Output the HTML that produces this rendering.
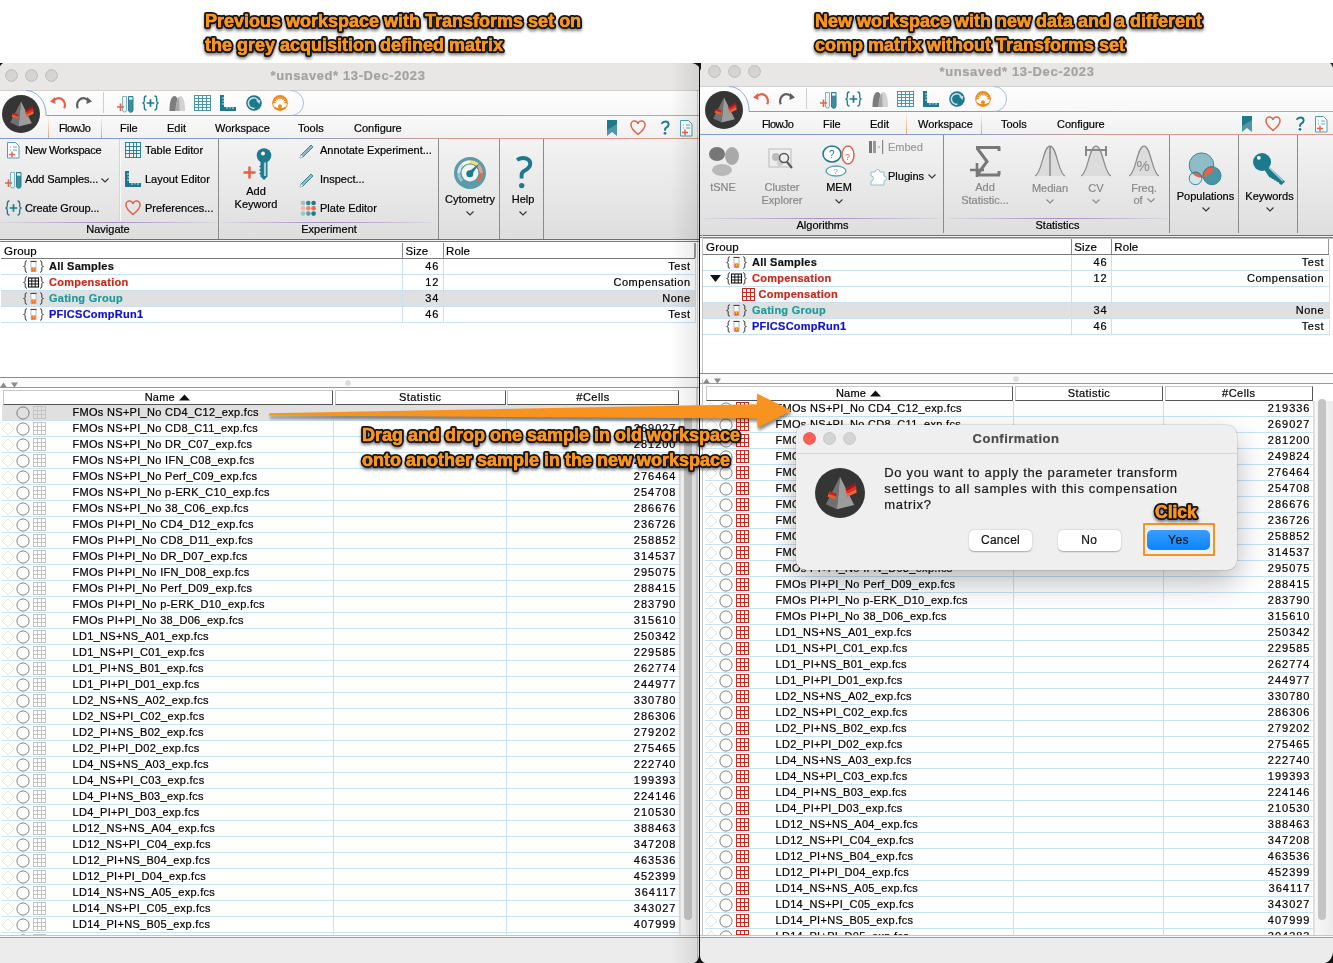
<!DOCTYPE html>
<html><head><meta charset="utf-8"><style>
html,body{margin:0;padding:0;}
body{width:1333px;height:963px;overflow:hidden;position:relative;background:#fff;font-family:'Liberation Sans', sans-serif;}
.clip{position:absolute;left:0;top:0;width:1333px;height:963px;overflow:hidden;}
div{-webkit-text-stroke:0.2px currentColor;}
</style></head><body><div id="root" style="position:absolute;left:0;top:0;width:1333px;height:963px;will-change:transform;">
<div class="clip" style="clip-path:inset(63px 634px 0 0px);"><div style="position:absolute;left:-3px;top:63px;width:702px;height:910px;background:#ececec;"></div><div style="position:absolute;left:-3px;top:63px;width:702px;height:28px;background:#e8e7e6;border-bottom:1px solid #d0d0d0;box-sizing:border-box;"></div><svg style="position:absolute;left:4.5px;top:69.2px;overflow:visible;" width="13" height="13" viewBox="0 0 13 13"><circle cx="6.5" cy="6.5" r="5.9" fill="#d4d4d4" stroke="#b9b9b9" stroke-width="0.9"/></svg><svg style="position:absolute;left:24.5px;top:69.2px;overflow:visible;" width="13" height="13" viewBox="0 0 13 13"><circle cx="6.5" cy="6.5" r="5.9" fill="#d4d4d4" stroke="#b9b9b9" stroke-width="0.9"/></svg><svg style="position:absolute;left:44.5px;top:69.2px;overflow:visible;" width="13" height="13" viewBox="0 0 13 13"><circle cx="6.5" cy="6.5" r="5.9" fill="#d4d4d4" stroke="#b9b9b9" stroke-width="0.9"/></svg><div style="position:absolute;top:67.00px;height:17px;line-height:17px;font-size:13px;color:#a2a2a2;font-weight:bold;white-space:nowrap;letter-spacing:0.6px;left:198.00px;width:300px;text-align:center;">*unsaved* 13-Dec-2023</div><div style="position:absolute;left:-3px;top:91px;width:702px;height:24.5px;background:linear-gradient(#fdfdfd,#f8f8f8);"></div><div style="position:absolute;left:-3px;top:115.5px;width:702px;height:22.5px;background:linear-gradient(#f9f9f9,#f1f1f1);"></div><div style="position:absolute;left:46px;top:115px;width:653px;height:1px;background:linear-gradient(90deg,#7aa0d8 0%,#7aa0d8 40%,#d99a86 70%,#d99a86 100%);"></div><div style="position:absolute;left:-3px;top:138px;width:702px;height:1px;background:linear-gradient(90deg,#7aa0d8 0%,#8aa0c8 40%,#d99a86 70%,#d99a86 100%);"></div><svg style="position:absolute;left:26px;top:89.5px;overflow:visible;" width="300" height="27" viewBox="0 0 300 27"><path d="M265 0.5 A12.5 12.5 0 0 1 265 25.5" fill="none" stroke="#9db8e0" stroke-width="0.9"/><path d="M0 0.5 A20 24 0 0 1 20 25.5" fill="none" stroke="#7ea6de" stroke-width="0.9"/></svg><svg style="position:absolute;left:2px;top:95px;overflow:visible;" width="38" height="38" viewBox="0 0 38 38"><g transform="translate(19,19) scale(1.0)"><circle cx="0" cy="0" r="19" fill="#353535"/>
<polygon points="0,-12.4 -10.8,8.6 -2.4,12.4" fill="#707070"/>
<polygon points="0,-12.4 -2.4,12.4 10.8,9.2" fill="#9c9c9c"/>
<polygon points="4.2,-3.6 12,-8 12.2,-5.6 4.6,-1.4" fill="#a8161a"/>
<polygon points="4.6,-1.4 12.2,-5.6 12.4,-3.0 5.0,0.8" fill="#e0302a"/>
<polygon points="5.0,0.8 12.4,-3.0 12.6,-0.2 5.4,3.0" fill="#f2642a"/>
<polygon points="-8.2,-1.6 -2.6,0.6 -3.0,2.8 -8.8,0.6" fill="#c62020"/>
<polygon points="-8.8,0.6 -3.0,2.8 -3.4,5.0 -9.4,2.8" fill="#ee5a2a"/></g></svg><svg style="position:absolute;left:50px;top:96.3px;overflow:visible;" width="16" height="12" viewBox="0 0 16 12"><path d="M3 5.8 A6 6.5 0 0 1 14.2 12.2" fill="none" stroke="#e0644a" stroke-width="2.2"/>
<path d="M0 5.5l5-4.5 .5 7z" fill="#e0644a"/></svg><svg style="position:absolute;left:76px;top:96.3px;overflow:visible;" width="16" height="12" viewBox="0 0 16 12"><path d="M13 5.8 A6 6.5 0 0 0 1.8 12.2" fill="none" stroke="#5e5e5e" stroke-width="2.2"/>
<path d="M16 5.5l-5-4.5-.5 7z" fill="#5e5e5e"/></svg><div style="position:absolute;left:103px;top:92px;width:1px;height:21px;background:#cfcfcf;"></div><svg style="position:absolute;left:116px;top:95px;overflow:visible;" width="18.0" height="18.0" viewBox="0 0 18.0 18.0"><g transform="scale(1.0)"><path d="M6.5 1.5h4v13.5a2 2 0 0 1-4 0z" fill="#e6f1f3" stroke="#7fb3bf" stroke-width="1"/>
<path d="M7 2.5h3v2h-3z" fill="#fff"/>
<path d="M12.5 1.5h4.5v13.5a2.25 2.25 0 0 1-4.5 0z" fill="#3f8c9c" stroke="#2b7f90" stroke-width="1"/>
<path d="M13 2.2h3.5v2.5h-3.5z" fill="#e6f1f3"/>
<path d="M1 12h7M4.5 8.5v7.5" stroke="#e0644a" stroke-width="1.6"/></g></svg><svg style="position:absolute;left:142px;top:95px;overflow:visible;" width="17.0" height="16.0" viewBox="0 0 17.0 16.0"><g transform="scale(1.0)" fill="none" stroke="#1d7a8c" stroke-width="1.3">
<path d="M4.5 1C2.6 1 2.3 2 2.3 3.5V6C2.3 7.2 1.6 7.8 0.6 8 1.6 8.2 2.3 8.8 2.3 10V12.5C2.3 14 2.6 15 4.5 15"/>
<path d="M12.5 1C14.4 1 14.7 2 14.7 3.5V6C14.7 7.2 15.4 7.8 16.4 8 15.4 8.2 14.7 8.8 14.7 10V12.5C14.7 14 14.4 15 12.5 15"/>
<path d="M8.5 4.2v7.6M4.7 8h7.6" stroke-width="1.7"/></g></svg><svg style="position:absolute;left:168px;top:95px;overflow:visible;" width="18" height="17" viewBox="0 0 18 17"><path d="M1.5 16C1.5 6 3.5 1 6.5 1S11 6 11.5 16z" fill="#7c7c7c"/>
<path d="M7.5 16C8 6 10 1 12.5 1S17 6 17 16z" fill="#d2d2d2"/>
<path d="M7.6 16C8 8 9.5 3.5 11 2 11.5 6 11.5 11 11.5 16z" fill="#a8a8a8"/></svg><svg style="position:absolute;left:194px;top:95px;overflow:visible;" width="17" height="16" viewBox="0 0 17 16"><path d="M0.5 0V16M4.5 0V16M8.5 0V16M12.5 0V16M16.5 0V16M0 0.5H17M0 3.5H17M0 6.5H17M0 9.5H17M0 12.5H17M0 15.5H17" stroke="#4a97a8" stroke-width="1.0" fill="none" shape-rendering="crispEdges"/></svg><svg style="position:absolute;left:220px;top:95px;overflow:visible;" width="16.0" height="16.0" viewBox="0 0 16.0 16.0"><g transform="scale(1.0)"><path d="M0 0h4v12h12v4H0z" fill="#1d7a8c"/>
<path d="M4 3h-2M4 6h-1.5M4 9h-2M7 12v2M10 12v1.5M13 12v2" stroke="#fff" stroke-width="0.8"/></g></svg><svg style="position:absolute;left:246px;top:95px;overflow:visible;" width="16" height="16" viewBox="0 0 16 16"><circle cx="8" cy="8" r="7.8" fill="#1d7a8c"/>
<path d="M8.5 13.2A5.2 5.2 0 1 1 12.2 5.6" fill="none" stroke="#cfe3e8" stroke-width="1.5"/>
<path d="M10.2 5.6l4.2-0.6-1 4z" fill="#cfe3e8"/></svg><svg style="position:absolute;left:272px;top:95px;overflow:visible;" width="16" height="16" viewBox="0 0 16 16"><circle cx="8" cy="8" r="7.9" fill="#f0891c"/>
<polygon points="1.10,8.60 4.47,7.90 1.63,5.96 5.01,6.60 3.12,3.72 6.00,5.61 5.36,2.23 7.30,5.07 8.00,1.70 8.70,5.07 10.64,2.23 10.00,5.61 12.88,3.72 10.99,6.60 14.37,5.96 11.53,7.90 14.90,8.60 14.20,11.20 11.00,12.80 5.00,12.80 1.80,11.20" fill="#fff"/>
<circle cx="8" cy="11.2" r="1.9" fill="#f0891c"/></svg><div style="position:absolute;top:121.30px;height:14px;line-height:14px;font-size:11px;color:#000;font-weight:normal;white-space:nowrap;letter-spacing:-0.6px;left:59px;">FlowJo</div><div style="position:absolute;top:121.30px;height:14px;line-height:14px;font-size:11px;color:#000;font-weight:normal;white-space:nowrap;left:120px;">File</div><div style="position:absolute;top:121.30px;height:14px;line-height:14px;font-size:11px;color:#000;font-weight:normal;white-space:nowrap;left:167px;">Edit</div><div style="position:absolute;top:121.30px;height:14px;line-height:14px;font-size:11px;color:#000;font-weight:normal;white-space:nowrap;left:215px;">Workspace</div><div style="position:absolute;top:121.30px;height:14px;line-height:14px;font-size:11px;color:#000;font-weight:normal;white-space:nowrap;left:298px;">Tools</div><div style="position:absolute;top:121.30px;height:14px;line-height:14px;font-size:11px;color:#000;font-weight:normal;white-space:nowrap;left:354px;">Configure</div><div style="position:absolute;left:47.5px;top:116px;width:1px;height:22px;background:linear-gradient(#f8f8f8,#e8a070);"></div><div style="position:absolute;left:100.5px;top:116px;width:1px;height:22px;background:linear-gradient(#f8f8f8,#e8a070);"></div><svg style="position:absolute;left:607px;top:120px;overflow:visible;" width="10" height="16" viewBox="0 0 10 16"><path d="M0 0h10v16l-5-4-5 4z" fill="#4f97a7"/><path d="M0 0h10v4L0 10z" fill="#1d7a8c"/></svg><svg style="position:absolute;left:630px;top:120px;overflow:visible;" width="16.0" height="16.0" viewBox="0 0 16.0 16.0"><g transform="scale(1.0)"><path d="M8 14.5C3 10.5 1 8 1 5a3.5 3.5 0 0 1 7-1 3.5 3.5 0 0 1 7 1c0 3-2 5.5-7 9.5z" fill="none" stroke="#e0644a" stroke-width="1.5"/></g></svg><svg style="position:absolute;left:659px;top:119px;overflow:visible;" width="12" height="17" viewBox="0 0 12 17"><g transform="translate(0.6,0.8) scale(0.87)"><path d="M2.2 4.5C3.5 2.6 5.2 2 6.8 2 9 2 10.4 3.4 10.4 5.3 10.4 7.3 8.8 8.2 7.6 9 6.6 9.7 6.2 10.4 6.2 11.6V12.5" fill="none" stroke="#1d7a8c" stroke-width="2.2"/><circle cx="6.2" cy="15.6" r="1.6" fill="#1d7a8c"/></g></svg><svg style="position:absolute;left:680px;top:120px;overflow:visible;" width="12.0" height="16.0" viewBox="0 0 12.0 16.0"><g transform="scale(1.0)"><path d="M0.5 0.5h8l3.5 3.5v12h-11.5z" fill="#fff" stroke="#4f9fb0" stroke-width="1"/>
<path d="M3 5h1M6 5h4M6 8h4M3 8h1" stroke="#4f9fb0" stroke-width="0.9"/>
<path d="M2 12.5h6M5 9.5v6" stroke="#e0644a" stroke-width="1.4"/></g></svg><div style="position:absolute;left:-3px;top:138.5px;width:702px;height:100.5px;background:linear-gradient(#f3f3f3,#dedede);"></div><div style="position:absolute;left:-3px;top:239px;width:702px;height:1px;background:#707070;"></div><div style="position:absolute;left:-3px;top:240px;width:702px;height:1px;background:#f4f4f4;"></div><div style="position:absolute;left:-3px;top:241px;width:702px;height:1px;background:#7a7a7a;"></div><svg style="position:absolute;left:7px;top:142px;overflow:visible;" width="12.0" height="16.0" viewBox="0 0 12.0 16.0"><g transform="scale(1.0)"><path d="M0.5 0.5h8l3.5 3.5v12h-11.5z" fill="#fff" stroke="#4f9fb0" stroke-width="1"/>
<path d="M3 5h1M6 5h4M6 8h4M3 8h1" stroke="#4f9fb0" stroke-width="0.9"/>
<path d="M2 12.5h6M5 9.5v6" stroke="#e0644a" stroke-width="1.4"/></g></svg><div style="position:absolute;top:143.30px;height:14px;line-height:14px;font-size:11px;color:#000;font-weight:normal;white-space:nowrap;letter-spacing:-0.28px;left:25px;">New Workspace</div><svg style="position:absolute;left:4px;top:171px;overflow:visible;" width="18.0" height="18.0" viewBox="0 0 18.0 18.0"><g transform="scale(1.0)"><path d="M6.5 1.5h4v13.5a2 2 0 0 1-4 0z" fill="#e6f1f3" stroke="#7fb3bf" stroke-width="1"/>
<path d="M7 2.5h3v2h-3z" fill="#fff"/>
<path d="M12.5 1.5h4.5v13.5a2.25 2.25 0 0 1-4.5 0z" fill="#3f8c9c" stroke="#2b7f90" stroke-width="1"/>
<path d="M13 2.2h3.5v2.5h-3.5z" fill="#e6f1f3"/>
<path d="M1 12h7M4.5 8.5v7.5" stroke="#e0644a" stroke-width="1.6"/></g></svg><div style="position:absolute;top:172.30px;height:14px;line-height:14px;font-size:11px;color:#000;font-weight:normal;white-space:nowrap;letter-spacing:-0.1px;left:25px;">Add Samples...</div><svg style="position:absolute;left:101px;top:177.5px;overflow:visible;" width="8" height="5" viewBox="0 0 8 5"><path d="M0.5 0.5L4 4 7.5 0.5" fill="none" stroke="#333" stroke-width="1.1"/></svg><svg style="position:absolute;left:5px;top:200px;overflow:visible;" width="17.0" height="16.0" viewBox="0 0 17.0 16.0"><g transform="scale(1.0)" fill="none" stroke="#1d7a8c" stroke-width="1.3">
<path d="M4.5 1C2.6 1 2.3 2 2.3 3.5V6C2.3 7.2 1.6 7.8 0.6 8 1.6 8.2 2.3 8.8 2.3 10V12.5C2.3 14 2.6 15 4.5 15"/>
<path d="M12.5 1C14.4 1 14.7 2 14.7 3.5V6C14.7 7.2 15.4 7.8 16.4 8 15.4 8.2 14.7 8.8 14.7 10V12.5C14.7 14 14.4 15 12.5 15"/>
<path d="M8.5 4.2v7.6M4.7 8h7.6" stroke-width="1.7"/></g></svg><div style="position:absolute;top:201.30px;height:14px;line-height:14px;font-size:11px;color:#000;font-weight:normal;white-space:nowrap;letter-spacing:-0.1px;left:25px;">Create Group...</div><div style="position:absolute;left:118.5px;top:139px;width:1px;height:82px;background:#d6d6d6;"></div><div style="position:absolute;left:119.5px;top:139px;width:1px;height:82px;background:#fbfbfb;"></div><svg style="position:absolute;left:125px;top:142px;overflow:visible;" width="16" height="16" viewBox="0 0 16 16"><path d="M0.5 0V16M4.5 0V16M8.5 0V16M11.5 0V16M15.5 0V16M0 0.5H16M0 4.5H16M0 8.5H16M0 11.5H16M0 15.5H16" stroke="#1d7a8c" stroke-width="0.9" fill="none" shape-rendering="crispEdges"/></svg><div style="position:absolute;top:143.30px;height:14px;line-height:14px;font-size:11px;color:#000;font-weight:normal;white-space:nowrap;left:145px;">Table Editor</div><svg style="position:absolute;left:125px;top:171px;overflow:visible;" width="16.0" height="16.0" viewBox="0 0 16.0 16.0"><g transform="scale(1.0)"><path d="M0 0h4v12h12v4H0z" fill="#1d7a8c"/>
<path d="M4 3h-2M4 6h-1.5M4 9h-2M7 12v2M10 12v1.5M13 12v2" stroke="#fff" stroke-width="0.8"/></g></svg><div style="position:absolute;top:172.30px;height:14px;line-height:14px;font-size:11px;color:#000;font-weight:normal;white-space:nowrap;left:145px;">Layout Editor</div><svg style="position:absolute;left:125px;top:200px;overflow:visible;" width="16.0" height="16.0" viewBox="0 0 16.0 16.0"><g transform="scale(1.0)"><path d="M8 14.5C3 10.5 1 8 1 5a3.5 3.5 0 0 1 7-1 3.5 3.5 0 0 1 7 1c0 3-2 5.5-7 9.5z" fill="none" stroke="#e0644a" stroke-width="1.5"/></g></svg><div style="position:absolute;top:201.30px;height:14px;line-height:14px;font-size:11px;color:#000;font-weight:normal;white-space:nowrap;left:145px;">Preferences...</div><div style="position:absolute;left:0px;top:221.5px;width:217px;height:1px;background:linear-gradient(90deg,rgba(170,140,200,0.1),rgba(150,110,190,0.75) 50%,rgba(170,140,200,0.1));"></div><div style="position:absolute;top:222.30px;height:14px;line-height:14px;font-size:11px;color:#000;font-weight:normal;white-space:nowrap;left:58.00px;width:100px;text-align:center;">Navigate</div><div style="position:absolute;left:217.5px;top:138.5px;width:1px;height:100.5px;background:#8c8c8c;"></div><svg style="position:absolute;left:243px;top:148px;overflow:visible;" width="28.0" height="32.0" viewBox="0 0 28.0 32.0"><g transform="scale(1.0)"><circle cx="21" cy="7.5" r="7.3" fill="#1d7a8c"/><circle cx="20" cy="5.5" r="1.9" fill="#fff"/>
<path d="M17.5 12h7v16.5l-3.5 3.5-3.5-3.5v-2l-1.5-1 1.5-1v-1.5l-1.5-1 1.5-1v-1.5l-1.5-1 1.5-1z" fill="#1d7a8c"/><path d="M22 14.5v13.5" stroke="#a6cfd8" stroke-width="2.2"/>
<path d="M0.5 24.5h12M6.5 18.5v12" stroke="#e0644a" stroke-width="2.5"/></g></svg><div style="position:absolute;top:184.00px;height:14px;line-height:14px;font-size:11px;color:#000;font-weight:normal;white-space:nowrap;left:216.00px;width:80px;text-align:center;">Add</div><div style="position:absolute;top:196.50px;height:14px;line-height:14px;font-size:11px;color:#000;font-weight:normal;white-space:nowrap;left:216.00px;width:80px;text-align:center;">Keyword</div><svg style="position:absolute;left:299px;top:141px;overflow:visible;" width="16" height="17" viewBox="0 0 16 17"><path d="M2 14l10-10 2 2-10 10-3 1z" fill="#8fb8c4" stroke="#1d7a8c" stroke-width="0.8"/>
<path d="M1 17l1-3 2 2z" fill="#fff"/></svg><div style="position:absolute;top:143.30px;height:14px;line-height:14px;font-size:11px;color:#000;font-weight:normal;white-space:nowrap;left:320px;">Annotate Experiment...</div><svg style="position:absolute;left:299px;top:170px;overflow:visible;" width="16" height="17" viewBox="0 0 16 17"><path d="M2 14l10-10 2 2-10 10-3 1z" fill="#8fb8c4" stroke="#1d7a8c" stroke-width="0.8"/>
<path d="M1 17l1-3 2 2z" fill="#fff"/></svg><div style="position:absolute;top:172.30px;height:14px;line-height:14px;font-size:11px;color:#000;font-weight:normal;white-space:nowrap;left:320px;">Inspect...</div><svg style="position:absolute;left:300px;top:200px;overflow:visible;" width="16" height="16" viewBox="0 0 16 16"><circle cx="3.0" cy="3.0" r="2.3" fill="#9bc4cf"/><circle cx="8.3" cy="3.0" r="2.3" fill="#2a8898"/><circle cx="13.6" cy="3.0" r="2.3" fill="#1d7a8c"/><circle cx="3.0" cy="8.3" r="2.3" fill="#f3b9a6"/><circle cx="8.3" cy="8.3" r="2.3" fill="#f28c6e"/><circle cx="13.6" cy="8.3" r="2.3" fill="#e96a4a"/><circle cx="3.0" cy="13.6" r="2.3" fill="#9bc4cf"/><circle cx="8.3" cy="13.6" r="2.3" fill="#5aa0b0"/><circle cx="13.6" cy="13.6" r="2.3" fill="#1d7a8c"/></svg><div style="position:absolute;top:201.30px;height:14px;line-height:14px;font-size:11px;color:#000;font-weight:normal;white-space:nowrap;left:320px;">Plate Editor</div><div style="position:absolute;left:222px;top:221.5px;width:210px;height:1px;background:linear-gradient(90deg,rgba(170,140,200,0.1),rgba(150,110,190,0.75) 50%,rgba(170,140,200,0.1));"></div><div style="position:absolute;top:222.30px;height:14px;line-height:14px;font-size:11px;color:#000;font-weight:normal;white-space:nowrap;left:279.00px;width:100px;text-align:center;">Experiment</div><div style="position:absolute;left:437.5px;top:138.5px;width:1px;height:100.5px;background:#8c8c8c;"></div><svg style="position:absolute;left:454px;top:157px;overflow:visible;" width="32" height="32" viewBox="0 0 32 32"><circle cx="16" cy="16" r="16" fill="#5b9ca9"/><path d="M6.95 25.05A12.8 12.8 0 0 1 3.20 16.00L6.40 16.00A9.6 9.6 0 0 0 9.21 22.79z" fill="#9cc3cc"/><path d="M3.20 16.00A12.8 12.8 0 0 1 6.95 6.95L9.21 9.21A9.6 9.6 0 0 0 6.40 16.00z" fill="#d3e6ea"/><path d="M6.95 6.95A12.8 12.8 0 0 1 16.00 3.20L16.00 6.40A9.6 9.6 0 0 0 9.21 9.21z" fill="#fdf6df"/><path d="M16.00 3.20A12.8 12.8 0 0 1 25.05 6.95L22.79 9.21A9.6 9.6 0 0 0 16.00 6.40z" fill="#f8dd80"/><path d="M25.05 6.95A12.8 12.8 0 0 1 28.80 16.00L25.60 16.00A9.6 9.6 0 0 0 22.79 9.21z" fill="#ee9b82"/><path d="M28.80 16.00A12.8 12.8 0 0 1 25.05 25.05L22.79 22.79A9.6 9.6 0 0 0 25.60 16.00z" fill="#e86a4b"/><circle cx="16" cy="16" r="9.6" fill="#5b9ca9"/><circle cx="16" cy="16" r="8.4" fill="#f1f4f4"/><path d="M14 15.2L25.6 6.2 17.2 18.6z" fill="#1d7a8c"/><circle cx="15.8" cy="16.8" r="3.5" fill="#1d7a8c"/></svg><div style="position:absolute;top:192.00px;height:14px;line-height:14px;font-size:11px;color:#000;font-weight:normal;white-space:nowrap;left:430.00px;width:80px;text-align:center;">Cytometry</div><svg style="position:absolute;left:466px;top:210.5px;overflow:visible;" width="8" height="5" viewBox="0 0 8 5"><path d="M0.5 0.5L4 4 7.5 0.5" fill="none" stroke="#333" stroke-width="1.1"/></svg><div style="position:absolute;left:499.3px;top:138.5px;width:1px;height:100.5px;background:#8c8c8c;"></div><svg style="position:absolute;left:513px;top:155px;overflow:visible;" width="20" height="34" viewBox="0 0 20 34"><path d="M4 5C7 3 11 2.6 13.5 3.6 16.6 4.8 17.6 7.6 17 10.2 16.3 13 13.4 14.6 11 16 9.4 17 8.6 18 8.6 20V23.5" fill="none" stroke="#1d7a8c" stroke-width="3.9"/><circle cx="8.7" cy="30.6" r="2.7" fill="#1d7a8c"/></svg><div style="position:absolute;top:192.00px;height:14px;line-height:14px;font-size:11px;color:#000;font-weight:normal;white-space:nowrap;left:483.00px;width:80px;text-align:center;">Help</div><svg style="position:absolute;left:519px;top:210.5px;overflow:visible;" width="8" height="5" viewBox="0 0 8 5"><path d="M0.5 0.5L4 4 7.5 0.5" fill="none" stroke="#333" stroke-width="1.1"/></svg><div style="position:absolute;left:543.4px;top:138.5px;width:1px;height:100.5px;background:#8c8c8c;"></div><div style="position:absolute;left:-3px;top:242px;width:702px;height:135.5px;background:#fff;"></div><div style="position:absolute;left:-3px;top:377px;width:702px;height:1px;background:#8a8a8a;"></div><div style="position:absolute;left:-3px;top:378px;width:702px;height:9.5px;background:#fafafa;"></div><div style="position:absolute;left:-3px;top:387px;width:702px;height:1px;background:#9a9a9a;"></div><svg style="position:absolute;left:0px;top:381.5px;overflow:visible;" width="20" height="6" viewBox="0 0 20 6"><path d="M0 5.5L3.5 0.5 7 5.5z" fill="#8a8a8a"/><path d="M11 0.5h7L14.5 5.5z" fill="#8a8a8a"/></svg><svg style="position:absolute;left:345px;top:380px;overflow:visible;" width="6" height="6" viewBox="0 0 6 6"><circle cx="3" cy="3" r="2.8" fill="#dcdcdc"/></svg><div style="position:absolute;left:1px;top:243px;width:694px;height:15px;background:#fff;"></div><div style="position:absolute;left:1px;top:257.5px;width:694px;height:1.5px;background:#7a7a7a;"></div><div style="position:absolute;left:402px;top:243px;width:1px;height:15px;background:#8a8a8a;"></div><div style="position:absolute;left:442.5px;top:243px;width:1px;height:15px;background:#8a8a8a;"></div><div style="position:absolute;left:694px;top:243px;width:1.5px;height:15px;background:#9a9a9a;"></div><div style="position:absolute;top:243.50px;height:15px;line-height:15px;font-size:11.5px;color:#000;font-weight:normal;white-space:nowrap;letter-spacing:0.2px;left:4px;">Group</div><div style="position:absolute;top:243.50px;height:15px;line-height:15px;font-size:11.5px;color:#000;font-weight:normal;white-space:nowrap;letter-spacing:0.1px;left:405.5px;">Size</div><div style="position:absolute;top:243.50px;height:15px;line-height:15px;font-size:11.5px;color:#000;font-weight:normal;white-space:nowrap;letter-spacing:0.1px;left:446.0px;">Role</div><div style="position:absolute;left:1px;top:273.5px;width:694px;height:1px;background:#c9e2f3;"></div><svg style="position:absolute;left:23px;top:260.0px;overflow:visible;" width="21" height="13" viewBox="0 0 21 13"><path d="M4 0.8C2.3 0.8 2.2 1.6 2.2 3V5C2.2 5.8 1.6 6.3 0.6 6.5 1.6 6.7 2.2 7.2 2.2 8V10C2.2 11.4 2.3 12.2 4 12.2" fill="none" stroke="#222" stroke-width="0.9"/><g transform="translate(21,0) scale(-1,1)"><path d="M4 0.8C2.3 0.8 2.2 1.6 2.2 3V5C2.2 5.8 1.6 6.3 0.6 6.5 1.6 6.7 2.2 7.2 2.2 8V10C2.2 11.4 2.3 12.2 4 12.2" fill="none" stroke="#222" stroke-width="0.9"/></g><rect x="8" y="1.5" width="5" height="10" fill="#fff" stroke="#b0b0b0" stroke-width="0.8"/><path d="M7.5 1.4H13.5" stroke="#333" stroke-width="1"/><rect x="8.5" y="7.5" width="4" height="3.8" fill="#e8401c"/><rect x="9.5" y="7.5" width="2" height="3" fill="#f6c21a"/></svg><div style="position:absolute;top:259.00px;height:14px;line-height:14px;font-size:11px;color:#111;font-weight:bold;white-space:nowrap;letter-spacing:0.25px;left:49px;">All Samples</div><div style="position:absolute;top:259.00px;height:14px;line-height:14px;font-size:11px;color:#000;font-weight:normal;white-space:nowrap;letter-spacing:1.0px;right:893.5px;text-align:right;">46</div><div style="position:absolute;top:259.00px;height:14px;line-height:14px;font-size:11px;color:#000;font-weight:normal;white-space:nowrap;letter-spacing:0.5px;right:642.5px;text-align:right;">Test</div><div style="position:absolute;left:1px;top:289.5px;width:694px;height:1px;background:#c9e2f3;"></div><svg style="position:absolute;left:23px;top:276.0px;overflow:visible;" width="21" height="13" viewBox="0 0 21 13"><path d="M4 0.8C2.3 0.8 2.2 1.6 2.2 3V5C2.2 5.8 1.6 6.3 0.6 6.5 1.6 6.7 2.2 7.2 2.2 8V10C2.2 11.4 2.3 12.2 4 12.2" fill="none" stroke="#222" stroke-width="0.9"/><g transform="translate(21,0) scale(-1,1)"><path d="M4 0.8C2.3 0.8 2.2 1.6 2.2 3V5C2.2 5.8 1.6 6.3 0.6 6.5 1.6 6.7 2.2 7.2 2.2 8V10C2.2 11.4 2.3 12.2 4 12.2" fill="none" stroke="#222" stroke-width="0.9"/></g><rect x="5.5" y="2" width="10" height="9" fill="#fff" stroke="#111" stroke-width="1.1"/><path d="M8.8 2v9M12.2 2v9M5.5 5h10M5.5 8h10" stroke="#111" stroke-width="1"/></svg><div style="position:absolute;top:275.00px;height:14px;line-height:14px;font-size:11px;color:#c8281e;font-weight:bold;white-space:nowrap;letter-spacing:0.25px;left:49px;">Compensation</div><div style="position:absolute;top:275.00px;height:14px;line-height:14px;font-size:11px;color:#000;font-weight:normal;white-space:nowrap;letter-spacing:1.0px;right:893.5px;text-align:right;">12</div><div style="position:absolute;top:275.00px;height:14px;line-height:14px;font-size:11px;color:#000;font-weight:normal;white-space:nowrap;letter-spacing:0.5px;right:642.5px;text-align:right;">Compensation</div><div style="position:absolute;left:1px;top:290.5px;width:694px;height:15.5px;background:#e0e0e0;"></div><div style="position:absolute;left:1px;top:305.5px;width:694px;height:1px;background:#c9e2f3;"></div><svg style="position:absolute;left:23px;top:292.0px;overflow:visible;" width="21" height="13" viewBox="0 0 21 13"><path d="M4 0.8C2.3 0.8 2.2 1.6 2.2 3V5C2.2 5.8 1.6 6.3 0.6 6.5 1.6 6.7 2.2 7.2 2.2 8V10C2.2 11.4 2.3 12.2 4 12.2" fill="none" stroke="#222" stroke-width="0.9"/><g transform="translate(21,0) scale(-1,1)"><path d="M4 0.8C2.3 0.8 2.2 1.6 2.2 3V5C2.2 5.8 1.6 6.3 0.6 6.5 1.6 6.7 2.2 7.2 2.2 8V10C2.2 11.4 2.3 12.2 4 12.2" fill="none" stroke="#222" stroke-width="0.9"/></g><rect x="8" y="1.5" width="5" height="10" fill="#fff" stroke="#b0b0b0" stroke-width="0.8"/><path d="M7.5 1.4H13.5" stroke="#333" stroke-width="1"/><rect x="8.5" y="7.5" width="4" height="3.8" fill="#e8401c"/><rect x="9.5" y="7.5" width="2" height="3" fill="#f6c21a"/></svg><div style="position:absolute;top:291.00px;height:14px;line-height:14px;font-size:11px;color:#1b9a9c;font-weight:bold;white-space:nowrap;letter-spacing:0.25px;left:49px;">Gating Group</div><div style="position:absolute;top:291.00px;height:14px;line-height:14px;font-size:11px;color:#000;font-weight:normal;white-space:nowrap;letter-spacing:1.0px;right:893.5px;text-align:right;">34</div><div style="position:absolute;top:291.00px;height:14px;line-height:14px;font-size:11px;color:#000;font-weight:normal;white-space:nowrap;letter-spacing:0.5px;right:642.5px;text-align:right;">None</div><div style="position:absolute;left:1px;top:321.5px;width:694px;height:1px;background:#c9e2f3;"></div><svg style="position:absolute;left:23px;top:308.0px;overflow:visible;" width="21" height="13" viewBox="0 0 21 13"><path d="M4 0.8C2.3 0.8 2.2 1.6 2.2 3V5C2.2 5.8 1.6 6.3 0.6 6.5 1.6 6.7 2.2 7.2 2.2 8V10C2.2 11.4 2.3 12.2 4 12.2" fill="none" stroke="#222" stroke-width="0.9"/><g transform="translate(21,0) scale(-1,1)"><path d="M4 0.8C2.3 0.8 2.2 1.6 2.2 3V5C2.2 5.8 1.6 6.3 0.6 6.5 1.6 6.7 2.2 7.2 2.2 8V10C2.2 11.4 2.3 12.2 4 12.2" fill="none" stroke="#222" stroke-width="0.9"/></g><rect x="8" y="1.5" width="5" height="10" fill="#fff" stroke="#b0b0b0" stroke-width="0.8"/><path d="M7.5 1.4H13.5" stroke="#333" stroke-width="1"/><rect x="8.5" y="7.5" width="4" height="3.8" fill="#e8401c"/><rect x="9.5" y="7.5" width="2" height="3" fill="#f6c21a"/></svg><div style="position:absolute;top:307.00px;height:14px;line-height:14px;font-size:11px;color:#1010d0;font-weight:bold;white-space:nowrap;letter-spacing:0.25px;left:49px;">PFICSCompRun1</div><div style="position:absolute;top:307.00px;height:14px;line-height:14px;font-size:11px;color:#000;font-weight:normal;white-space:nowrap;letter-spacing:1.0px;right:893.5px;text-align:right;">46</div><div style="position:absolute;top:307.00px;height:14px;line-height:14px;font-size:11px;color:#000;font-weight:normal;white-space:nowrap;letter-spacing:0.5px;right:642.5px;text-align:right;">Test</div><div style="position:absolute;left:402px;top:259px;width:1px;height:63.5px;background:#c9e2f3;"></div><div style="position:absolute;left:442.5px;top:259px;width:1px;height:63.5px;background:#c9e2f3;"></div><div style="position:absolute;left:695px;top:259px;width:1px;height:63.5px;background:#c9e2f3;"></div><div style="position:absolute;left:-3px;top:388px;width:702px;height:547px;background:#fff;"></div><div style="position:absolute;left:3px;top:390px;width:329.5px;height:14.5px;background:#fff;border-top:1px solid #c8c8c8;border-left:1px solid #c8c8c8;border-right:1.5px solid #555;border-bottom:1.5px solid #555;box-sizing:border-box;"></div><div style="position:absolute;top:390.30px;height:14px;line-height:14px;font-size:11px;color:#000;font-weight:normal;white-space:nowrap;letter-spacing:0.2px;left:109.75px;width:100px;text-align:center;">Name</div><svg style="position:absolute;left:178.75px;top:393.5px;overflow:visible;" width="12" height="7" viewBox="0 0 12 7"><path d="M0 6.5L5.5 0.5 11 6.5z" fill="#111"/></svg><div style="position:absolute;left:335.0px;top:390px;width:170.5px;height:14.5px;background:#fff;border-top:1px solid #c8c8c8;border-left:1px solid #c8c8c8;border-right:1.5px solid #555;border-bottom:1.5px solid #555;box-sizing:border-box;"></div><div style="position:absolute;top:390.30px;height:14px;line-height:14px;font-size:11px;color:#000;font-weight:normal;white-space:nowrap;letter-spacing:0.45px;left:345.25px;width:150px;text-align:center;">Statistic</div><div style="position:absolute;left:507.0px;top:390px;width:172.0px;height:14.5px;background:#fff;border-top:1px solid #c8c8c8;border-left:1px solid #c8c8c8;border-right:1.5px solid #555;border-bottom:1.5px solid #555;box-sizing:border-box;"></div><div style="position:absolute;top:390.30px;height:14px;line-height:14px;font-size:11px;color:#000;font-weight:normal;white-space:nowrap;letter-spacing:0.45px;left:518.00px;width:150px;text-align:center;">#Cells</div><div style="position:absolute;left:680px;top:404.5px;width:17px;height:530.5px;background:linear-gradient(90deg,#f7f7f7,#ececec);border-left:1px solid #e4e4e4;box-sizing:border-box;"></div><div style="position:absolute;left:684px;top:410px;width:8px;height:510px;background:#c4c4c4;border-radius:4px;"></div><div class="clip" style="clip-path:inset(404.5px 0 28px 0);"><div style="position:absolute;left:2px;top:404.5px;width:677px;height:16px;background:#e0e0e0;"></div><div style="position:absolute;left:2px;top:420.0px;width:677px;height:1px;background:#c9e2f3;"></div><svg style="position:absolute;left:16.4px;top:405.5px;overflow:visible;" width="14" height="14" viewBox="0 0 14 14"><circle cx="7" cy="7" r="6.1" fill="none" stroke="#707070" stroke-width="0.9"/></svg><svg style="position:absolute;left:33px;top:406px;overflow:visible;" width="13" height="13" viewBox="0 0 13 13"><path d="M0.5 0V13M4.5 0V13M8.5 0V13M12.5 0V13M0 0.5H13M0 4.5H13M0 8.5H13M0 12.5H13" stroke="#c4c4c4" stroke-width="1.0" fill="none" shape-rendering="crispEdges"/></svg><div style="position:absolute;top:404.50px;height:14px;line-height:14px;font-size:11px;color:#000;font-weight:normal;white-space:nowrap;letter-spacing:0.3px;left:72.5px;">FMOs NS+PI_No CD4_C12_exp.fcs</div><div style="position:absolute;top:404.50px;height:14px;line-height:14px;font-size:11px;color:#000;font-weight:normal;white-space:nowrap;letter-spacing:1.0px;right:656.5px;text-align:right;">219336</div><div style="position:absolute;left:2px;top:436.0px;width:677px;height:1px;background:#c9e2f3;"></div><svg style="position:absolute;left:0.5px;top:421.5px;overflow:visible;" width="14" height="14" viewBox="0 0 14 14"><path d="M7 1L13 7 7 13 1 7z" fill="none" stroke="#e2e2e2" stroke-width="1"/></svg><svg style="position:absolute;left:16.4px;top:421.5px;overflow:visible;" width="14" height="14" viewBox="0 0 14 14"><circle cx="7" cy="7" r="6.1" fill="none" stroke="#707070" stroke-width="0.9"/></svg><svg style="position:absolute;left:33px;top:422px;overflow:visible;" width="13" height="13" viewBox="0 0 13 13"><path d="M0.5 0V13M4.5 0V13M8.5 0V13M12.5 0V13M0 0.5H13M0 4.5H13M0 8.5H13M0 12.5H13" stroke="#c4c4c4" stroke-width="1.0" fill="none" shape-rendering="crispEdges"/></svg><div style="position:absolute;top:420.50px;height:14px;line-height:14px;font-size:11px;color:#000;font-weight:normal;white-space:nowrap;letter-spacing:0.3px;left:72.5px;">FMOs NS+PI_No CD8_C11_exp.fcs</div><div style="position:absolute;top:420.50px;height:14px;line-height:14px;font-size:11px;color:#000;font-weight:normal;white-space:nowrap;letter-spacing:1.0px;right:656.5px;text-align:right;">269027</div><div style="position:absolute;left:2px;top:452.0px;width:677px;height:1px;background:#c9e2f3;"></div><svg style="position:absolute;left:0.5px;top:437.5px;overflow:visible;" width="14" height="14" viewBox="0 0 14 14"><path d="M7 1L13 7 7 13 1 7z" fill="none" stroke="#e2e2e2" stroke-width="1"/></svg><svg style="position:absolute;left:16.4px;top:437.5px;overflow:visible;" width="14" height="14" viewBox="0 0 14 14"><circle cx="7" cy="7" r="6.1" fill="none" stroke="#707070" stroke-width="0.9"/></svg><svg style="position:absolute;left:33px;top:438px;overflow:visible;" width="13" height="13" viewBox="0 0 13 13"><path d="M0.5 0V13M4.5 0V13M8.5 0V13M12.5 0V13M0 0.5H13M0 4.5H13M0 8.5H13M0 12.5H13" stroke="#c4c4c4" stroke-width="1.0" fill="none" shape-rendering="crispEdges"/></svg><div style="position:absolute;top:436.50px;height:14px;line-height:14px;font-size:11px;color:#000;font-weight:normal;white-space:nowrap;letter-spacing:0.3px;left:72.5px;">FMOs NS+PI_No DR_C07_exp.fcs</div><div style="position:absolute;top:436.50px;height:14px;line-height:14px;font-size:11px;color:#000;font-weight:normal;white-space:nowrap;letter-spacing:1.0px;right:656.5px;text-align:right;">281200</div><div style="position:absolute;left:2px;top:468.0px;width:677px;height:1px;background:#c9e2f3;"></div><svg style="position:absolute;left:0.5px;top:453.5px;overflow:visible;" width="14" height="14" viewBox="0 0 14 14"><path d="M7 1L13 7 7 13 1 7z" fill="none" stroke="#e2e2e2" stroke-width="1"/></svg><svg style="position:absolute;left:16.4px;top:453.5px;overflow:visible;" width="14" height="14" viewBox="0 0 14 14"><circle cx="7" cy="7" r="6.1" fill="none" stroke="#707070" stroke-width="0.9"/></svg><svg style="position:absolute;left:33px;top:454px;overflow:visible;" width="13" height="13" viewBox="0 0 13 13"><path d="M0.5 0V13M4.5 0V13M8.5 0V13M12.5 0V13M0 0.5H13M0 4.5H13M0 8.5H13M0 12.5H13" stroke="#c4c4c4" stroke-width="1.0" fill="none" shape-rendering="crispEdges"/></svg><div style="position:absolute;top:452.50px;height:14px;line-height:14px;font-size:11px;color:#000;font-weight:normal;white-space:nowrap;letter-spacing:0.3px;left:72.5px;">FMOs NS+PI_No IFN_C08_exp.fcs</div><div style="position:absolute;top:452.50px;height:14px;line-height:14px;font-size:11px;color:#000;font-weight:normal;white-space:nowrap;letter-spacing:1.0px;right:656.5px;text-align:right;">249824</div><div style="position:absolute;left:2px;top:484.0px;width:677px;height:1px;background:#c9e2f3;"></div><svg style="position:absolute;left:0.5px;top:469.5px;overflow:visible;" width="14" height="14" viewBox="0 0 14 14"><path d="M7 1L13 7 7 13 1 7z" fill="none" stroke="#e2e2e2" stroke-width="1"/></svg><svg style="position:absolute;left:16.4px;top:469.5px;overflow:visible;" width="14" height="14" viewBox="0 0 14 14"><circle cx="7" cy="7" r="6.1" fill="none" stroke="#707070" stroke-width="0.9"/></svg><svg style="position:absolute;left:33px;top:470px;overflow:visible;" width="13" height="13" viewBox="0 0 13 13"><path d="M0.5 0V13M4.5 0V13M8.5 0V13M12.5 0V13M0 0.5H13M0 4.5H13M0 8.5H13M0 12.5H13" stroke="#c4c4c4" stroke-width="1.0" fill="none" shape-rendering="crispEdges"/></svg><div style="position:absolute;top:468.50px;height:14px;line-height:14px;font-size:11px;color:#000;font-weight:normal;white-space:nowrap;letter-spacing:0.3px;left:72.5px;">FMOs NS+PI_No Perf_C09_exp.fcs</div><div style="position:absolute;top:468.50px;height:14px;line-height:14px;font-size:11px;color:#000;font-weight:normal;white-space:nowrap;letter-spacing:1.0px;right:656.5px;text-align:right;">276464</div><div style="position:absolute;left:2px;top:500.0px;width:677px;height:1px;background:#c9e2f3;"></div><svg style="position:absolute;left:0.5px;top:485.5px;overflow:visible;" width="14" height="14" viewBox="0 0 14 14"><path d="M7 1L13 7 7 13 1 7z" fill="none" stroke="#e2e2e2" stroke-width="1"/></svg><svg style="position:absolute;left:16.4px;top:485.5px;overflow:visible;" width="14" height="14" viewBox="0 0 14 14"><circle cx="7" cy="7" r="6.1" fill="none" stroke="#707070" stroke-width="0.9"/></svg><svg style="position:absolute;left:33px;top:486px;overflow:visible;" width="13" height="13" viewBox="0 0 13 13"><path d="M0.5 0V13M4.5 0V13M8.5 0V13M12.5 0V13M0 0.5H13M0 4.5H13M0 8.5H13M0 12.5H13" stroke="#c4c4c4" stroke-width="1.0" fill="none" shape-rendering="crispEdges"/></svg><div style="position:absolute;top:484.50px;height:14px;line-height:14px;font-size:11px;color:#000;font-weight:normal;white-space:nowrap;letter-spacing:0.3px;left:72.5px;">FMOs NS+PI_No p-ERK_C10_exp.fcs</div><div style="position:absolute;top:484.50px;height:14px;line-height:14px;font-size:11px;color:#000;font-weight:normal;white-space:nowrap;letter-spacing:1.0px;right:656.5px;text-align:right;">254708</div><div style="position:absolute;left:2px;top:516.0px;width:677px;height:1px;background:#c9e2f3;"></div><svg style="position:absolute;left:0.5px;top:501.5px;overflow:visible;" width="14" height="14" viewBox="0 0 14 14"><path d="M7 1L13 7 7 13 1 7z" fill="none" stroke="#e2e2e2" stroke-width="1"/></svg><svg style="position:absolute;left:16.4px;top:501.5px;overflow:visible;" width="14" height="14" viewBox="0 0 14 14"><circle cx="7" cy="7" r="6.1" fill="none" stroke="#707070" stroke-width="0.9"/></svg><svg style="position:absolute;left:33px;top:502px;overflow:visible;" width="13" height="13" viewBox="0 0 13 13"><path d="M0.5 0V13M4.5 0V13M8.5 0V13M12.5 0V13M0 0.5H13M0 4.5H13M0 8.5H13M0 12.5H13" stroke="#c4c4c4" stroke-width="1.0" fill="none" shape-rendering="crispEdges"/></svg><div style="position:absolute;top:500.50px;height:14px;line-height:14px;font-size:11px;color:#000;font-weight:normal;white-space:nowrap;letter-spacing:0.3px;left:72.5px;">FMOs NS+PI_No 38_C06_exp.fcs</div><div style="position:absolute;top:500.50px;height:14px;line-height:14px;font-size:11px;color:#000;font-weight:normal;white-space:nowrap;letter-spacing:1.0px;right:656.5px;text-align:right;">286676</div><div style="position:absolute;left:2px;top:532.0px;width:677px;height:1px;background:#c9e2f3;"></div><svg style="position:absolute;left:0.5px;top:517.5px;overflow:visible;" width="14" height="14" viewBox="0 0 14 14"><path d="M7 1L13 7 7 13 1 7z" fill="none" stroke="#e2e2e2" stroke-width="1"/></svg><svg style="position:absolute;left:16.4px;top:517.5px;overflow:visible;" width="14" height="14" viewBox="0 0 14 14"><circle cx="7" cy="7" r="6.1" fill="none" stroke="#707070" stroke-width="0.9"/></svg><svg style="position:absolute;left:33px;top:518px;overflow:visible;" width="13" height="13" viewBox="0 0 13 13"><path d="M0.5 0V13M4.5 0V13M8.5 0V13M12.5 0V13M0 0.5H13M0 4.5H13M0 8.5H13M0 12.5H13" stroke="#c4c4c4" stroke-width="1.0" fill="none" shape-rendering="crispEdges"/></svg><div style="position:absolute;top:516.50px;height:14px;line-height:14px;font-size:11px;color:#000;font-weight:normal;white-space:nowrap;letter-spacing:0.3px;left:72.5px;">FMOs PI+PI_No CD4_D12_exp.fcs</div><div style="position:absolute;top:516.50px;height:14px;line-height:14px;font-size:11px;color:#000;font-weight:normal;white-space:nowrap;letter-spacing:1.0px;right:656.5px;text-align:right;">236726</div><div style="position:absolute;left:2px;top:548.0px;width:677px;height:1px;background:#c9e2f3;"></div><svg style="position:absolute;left:0.5px;top:533.5px;overflow:visible;" width="14" height="14" viewBox="0 0 14 14"><path d="M7 1L13 7 7 13 1 7z" fill="none" stroke="#e2e2e2" stroke-width="1"/></svg><svg style="position:absolute;left:16.4px;top:533.5px;overflow:visible;" width="14" height="14" viewBox="0 0 14 14"><circle cx="7" cy="7" r="6.1" fill="none" stroke="#707070" stroke-width="0.9"/></svg><svg style="position:absolute;left:33px;top:534px;overflow:visible;" width="13" height="13" viewBox="0 0 13 13"><path d="M0.5 0V13M4.5 0V13M8.5 0V13M12.5 0V13M0 0.5H13M0 4.5H13M0 8.5H13M0 12.5H13" stroke="#c4c4c4" stroke-width="1.0" fill="none" shape-rendering="crispEdges"/></svg><div style="position:absolute;top:532.50px;height:14px;line-height:14px;font-size:11px;color:#000;font-weight:normal;white-space:nowrap;letter-spacing:0.3px;left:72.5px;">FMOs PI+PI_No CD8_D11_exp.fcs</div><div style="position:absolute;top:532.50px;height:14px;line-height:14px;font-size:11px;color:#000;font-weight:normal;white-space:nowrap;letter-spacing:1.0px;right:656.5px;text-align:right;">258852</div><div style="position:absolute;left:2px;top:564.0px;width:677px;height:1px;background:#c9e2f3;"></div><svg style="position:absolute;left:0.5px;top:549.5px;overflow:visible;" width="14" height="14" viewBox="0 0 14 14"><path d="M7 1L13 7 7 13 1 7z" fill="none" stroke="#e2e2e2" stroke-width="1"/></svg><svg style="position:absolute;left:16.4px;top:549.5px;overflow:visible;" width="14" height="14" viewBox="0 0 14 14"><circle cx="7" cy="7" r="6.1" fill="none" stroke="#707070" stroke-width="0.9"/></svg><svg style="position:absolute;left:33px;top:550px;overflow:visible;" width="13" height="13" viewBox="0 0 13 13"><path d="M0.5 0V13M4.5 0V13M8.5 0V13M12.5 0V13M0 0.5H13M0 4.5H13M0 8.5H13M0 12.5H13" stroke="#c4c4c4" stroke-width="1.0" fill="none" shape-rendering="crispEdges"/></svg><div style="position:absolute;top:548.50px;height:14px;line-height:14px;font-size:11px;color:#000;font-weight:normal;white-space:nowrap;letter-spacing:0.3px;left:72.5px;">FMOs PI+PI_No DR_D07_exp.fcs</div><div style="position:absolute;top:548.50px;height:14px;line-height:14px;font-size:11px;color:#000;font-weight:normal;white-space:nowrap;letter-spacing:1.0px;right:656.5px;text-align:right;">314537</div><div style="position:absolute;left:2px;top:580.0px;width:677px;height:1px;background:#c9e2f3;"></div><svg style="position:absolute;left:0.5px;top:565.5px;overflow:visible;" width="14" height="14" viewBox="0 0 14 14"><path d="M7 1L13 7 7 13 1 7z" fill="none" stroke="#e2e2e2" stroke-width="1"/></svg><svg style="position:absolute;left:16.4px;top:565.5px;overflow:visible;" width="14" height="14" viewBox="0 0 14 14"><circle cx="7" cy="7" r="6.1" fill="none" stroke="#707070" stroke-width="0.9"/></svg><svg style="position:absolute;left:33px;top:566px;overflow:visible;" width="13" height="13" viewBox="0 0 13 13"><path d="M0.5 0V13M4.5 0V13M8.5 0V13M12.5 0V13M0 0.5H13M0 4.5H13M0 8.5H13M0 12.5H13" stroke="#c4c4c4" stroke-width="1.0" fill="none" shape-rendering="crispEdges"/></svg><div style="position:absolute;top:564.50px;height:14px;line-height:14px;font-size:11px;color:#000;font-weight:normal;white-space:nowrap;letter-spacing:0.3px;left:72.5px;">FMOs PI+PI_No IFN_D08_exp.fcs</div><div style="position:absolute;top:564.50px;height:14px;line-height:14px;font-size:11px;color:#000;font-weight:normal;white-space:nowrap;letter-spacing:1.0px;right:656.5px;text-align:right;">295075</div><div style="position:absolute;left:2px;top:596.0px;width:677px;height:1px;background:#c9e2f3;"></div><svg style="position:absolute;left:0.5px;top:581.5px;overflow:visible;" width="14" height="14" viewBox="0 0 14 14"><path d="M7 1L13 7 7 13 1 7z" fill="none" stroke="#e2e2e2" stroke-width="1"/></svg><svg style="position:absolute;left:16.4px;top:581.5px;overflow:visible;" width="14" height="14" viewBox="0 0 14 14"><circle cx="7" cy="7" r="6.1" fill="none" stroke="#707070" stroke-width="0.9"/></svg><svg style="position:absolute;left:33px;top:582px;overflow:visible;" width="13" height="13" viewBox="0 0 13 13"><path d="M0.5 0V13M4.5 0V13M8.5 0V13M12.5 0V13M0 0.5H13M0 4.5H13M0 8.5H13M0 12.5H13" stroke="#c4c4c4" stroke-width="1.0" fill="none" shape-rendering="crispEdges"/></svg><div style="position:absolute;top:580.50px;height:14px;line-height:14px;font-size:11px;color:#000;font-weight:normal;white-space:nowrap;letter-spacing:0.3px;left:72.5px;">FMOs PI+PI_No Perf_D09_exp.fcs</div><div style="position:absolute;top:580.50px;height:14px;line-height:14px;font-size:11px;color:#000;font-weight:normal;white-space:nowrap;letter-spacing:1.0px;right:656.5px;text-align:right;">288415</div><div style="position:absolute;left:2px;top:612.0px;width:677px;height:1px;background:#c9e2f3;"></div><svg style="position:absolute;left:0.5px;top:597.5px;overflow:visible;" width="14" height="14" viewBox="0 0 14 14"><path d="M7 1L13 7 7 13 1 7z" fill="none" stroke="#e2e2e2" stroke-width="1"/></svg><svg style="position:absolute;left:16.4px;top:597.5px;overflow:visible;" width="14" height="14" viewBox="0 0 14 14"><circle cx="7" cy="7" r="6.1" fill="none" stroke="#707070" stroke-width="0.9"/></svg><svg style="position:absolute;left:33px;top:598px;overflow:visible;" width="13" height="13" viewBox="0 0 13 13"><path d="M0.5 0V13M4.5 0V13M8.5 0V13M12.5 0V13M0 0.5H13M0 4.5H13M0 8.5H13M0 12.5H13" stroke="#c4c4c4" stroke-width="1.0" fill="none" shape-rendering="crispEdges"/></svg><div style="position:absolute;top:596.50px;height:14px;line-height:14px;font-size:11px;color:#000;font-weight:normal;white-space:nowrap;letter-spacing:0.3px;left:72.5px;">FMOs PI+PI_No p-ERK_D10_exp.fcs</div><div style="position:absolute;top:596.50px;height:14px;line-height:14px;font-size:11px;color:#000;font-weight:normal;white-space:nowrap;letter-spacing:1.0px;right:656.5px;text-align:right;">283790</div><div style="position:absolute;left:2px;top:628.0px;width:677px;height:1px;background:#c9e2f3;"></div><svg style="position:absolute;left:0.5px;top:613.5px;overflow:visible;" width="14" height="14" viewBox="0 0 14 14"><path d="M7 1L13 7 7 13 1 7z" fill="none" stroke="#e2e2e2" stroke-width="1"/></svg><svg style="position:absolute;left:16.4px;top:613.5px;overflow:visible;" width="14" height="14" viewBox="0 0 14 14"><circle cx="7" cy="7" r="6.1" fill="none" stroke="#707070" stroke-width="0.9"/></svg><svg style="position:absolute;left:33px;top:614px;overflow:visible;" width="13" height="13" viewBox="0 0 13 13"><path d="M0.5 0V13M4.5 0V13M8.5 0V13M12.5 0V13M0 0.5H13M0 4.5H13M0 8.5H13M0 12.5H13" stroke="#c4c4c4" stroke-width="1.0" fill="none" shape-rendering="crispEdges"/></svg><div style="position:absolute;top:612.50px;height:14px;line-height:14px;font-size:11px;color:#000;font-weight:normal;white-space:nowrap;letter-spacing:0.3px;left:72.5px;">FMOs PI+PI_No 38_D06_exp.fcs</div><div style="position:absolute;top:612.50px;height:14px;line-height:14px;font-size:11px;color:#000;font-weight:normal;white-space:nowrap;letter-spacing:1.0px;right:656.5px;text-align:right;">315610</div><div style="position:absolute;left:2px;top:644.0px;width:677px;height:1px;background:#c9e2f3;"></div><svg style="position:absolute;left:0.5px;top:629.5px;overflow:visible;" width="14" height="14" viewBox="0 0 14 14"><path d="M7 1L13 7 7 13 1 7z" fill="none" stroke="#e2e2e2" stroke-width="1"/></svg><svg style="position:absolute;left:16.4px;top:629.5px;overflow:visible;" width="14" height="14" viewBox="0 0 14 14"><circle cx="7" cy="7" r="6.1" fill="none" stroke="#707070" stroke-width="0.9"/></svg><svg style="position:absolute;left:33px;top:630px;overflow:visible;" width="13" height="13" viewBox="0 0 13 13"><path d="M0.5 0V13M4.5 0V13M8.5 0V13M12.5 0V13M0 0.5H13M0 4.5H13M0 8.5H13M0 12.5H13" stroke="#c4c4c4" stroke-width="1.0" fill="none" shape-rendering="crispEdges"/></svg><div style="position:absolute;top:628.50px;height:14px;line-height:14px;font-size:11px;color:#000;font-weight:normal;white-space:nowrap;letter-spacing:0.3px;left:72.5px;">LD1_NS+NS_A01_exp.fcs</div><div style="position:absolute;top:628.50px;height:14px;line-height:14px;font-size:11px;color:#000;font-weight:normal;white-space:nowrap;letter-spacing:1.0px;right:656.5px;text-align:right;">250342</div><div style="position:absolute;left:2px;top:660.0px;width:677px;height:1px;background:#c9e2f3;"></div><svg style="position:absolute;left:0.5px;top:645.5px;overflow:visible;" width="14" height="14" viewBox="0 0 14 14"><path d="M7 1L13 7 7 13 1 7z" fill="none" stroke="#e2e2e2" stroke-width="1"/></svg><svg style="position:absolute;left:16.4px;top:645.5px;overflow:visible;" width="14" height="14" viewBox="0 0 14 14"><circle cx="7" cy="7" r="6.1" fill="none" stroke="#707070" stroke-width="0.9"/></svg><svg style="position:absolute;left:33px;top:646px;overflow:visible;" width="13" height="13" viewBox="0 0 13 13"><path d="M0.5 0V13M4.5 0V13M8.5 0V13M12.5 0V13M0 0.5H13M0 4.5H13M0 8.5H13M0 12.5H13" stroke="#c4c4c4" stroke-width="1.0" fill="none" shape-rendering="crispEdges"/></svg><div style="position:absolute;top:644.50px;height:14px;line-height:14px;font-size:11px;color:#000;font-weight:normal;white-space:nowrap;letter-spacing:0.3px;left:72.5px;">LD1_NS+PI_C01_exp.fcs</div><div style="position:absolute;top:644.50px;height:14px;line-height:14px;font-size:11px;color:#000;font-weight:normal;white-space:nowrap;letter-spacing:1.0px;right:656.5px;text-align:right;">229585</div><div style="position:absolute;left:2px;top:676.0px;width:677px;height:1px;background:#c9e2f3;"></div><svg style="position:absolute;left:0.5px;top:661.5px;overflow:visible;" width="14" height="14" viewBox="0 0 14 14"><path d="M7 1L13 7 7 13 1 7z" fill="none" stroke="#e2e2e2" stroke-width="1"/></svg><svg style="position:absolute;left:16.4px;top:661.5px;overflow:visible;" width="14" height="14" viewBox="0 0 14 14"><circle cx="7" cy="7" r="6.1" fill="none" stroke="#707070" stroke-width="0.9"/></svg><svg style="position:absolute;left:33px;top:662px;overflow:visible;" width="13" height="13" viewBox="0 0 13 13"><path d="M0.5 0V13M4.5 0V13M8.5 0V13M12.5 0V13M0 0.5H13M0 4.5H13M0 8.5H13M0 12.5H13" stroke="#c4c4c4" stroke-width="1.0" fill="none" shape-rendering="crispEdges"/></svg><div style="position:absolute;top:660.50px;height:14px;line-height:14px;font-size:11px;color:#000;font-weight:normal;white-space:nowrap;letter-spacing:0.3px;left:72.5px;">LD1_PI+NS_B01_exp.fcs</div><div style="position:absolute;top:660.50px;height:14px;line-height:14px;font-size:11px;color:#000;font-weight:normal;white-space:nowrap;letter-spacing:1.0px;right:656.5px;text-align:right;">262774</div><div style="position:absolute;left:2px;top:692.0px;width:677px;height:1px;background:#c9e2f3;"></div><svg style="position:absolute;left:0.5px;top:677.5px;overflow:visible;" width="14" height="14" viewBox="0 0 14 14"><path d="M7 1L13 7 7 13 1 7z" fill="none" stroke="#e2e2e2" stroke-width="1"/></svg><svg style="position:absolute;left:16.4px;top:677.5px;overflow:visible;" width="14" height="14" viewBox="0 0 14 14"><circle cx="7" cy="7" r="6.1" fill="none" stroke="#707070" stroke-width="0.9"/></svg><svg style="position:absolute;left:33px;top:678px;overflow:visible;" width="13" height="13" viewBox="0 0 13 13"><path d="M0.5 0V13M4.5 0V13M8.5 0V13M12.5 0V13M0 0.5H13M0 4.5H13M0 8.5H13M0 12.5H13" stroke="#c4c4c4" stroke-width="1.0" fill="none" shape-rendering="crispEdges"/></svg><div style="position:absolute;top:676.50px;height:14px;line-height:14px;font-size:11px;color:#000;font-weight:normal;white-space:nowrap;letter-spacing:0.3px;left:72.5px;">LD1_PI+PI_D01_exp.fcs</div><div style="position:absolute;top:676.50px;height:14px;line-height:14px;font-size:11px;color:#000;font-weight:normal;white-space:nowrap;letter-spacing:1.0px;right:656.5px;text-align:right;">244977</div><div style="position:absolute;left:2px;top:708.0px;width:677px;height:1px;background:#c9e2f3;"></div><svg style="position:absolute;left:0.5px;top:693.5px;overflow:visible;" width="14" height="14" viewBox="0 0 14 14"><path d="M7 1L13 7 7 13 1 7z" fill="none" stroke="#e2e2e2" stroke-width="1"/></svg><svg style="position:absolute;left:16.4px;top:693.5px;overflow:visible;" width="14" height="14" viewBox="0 0 14 14"><circle cx="7" cy="7" r="6.1" fill="none" stroke="#707070" stroke-width="0.9"/></svg><svg style="position:absolute;left:33px;top:694px;overflow:visible;" width="13" height="13" viewBox="0 0 13 13"><path d="M0.5 0V13M4.5 0V13M8.5 0V13M12.5 0V13M0 0.5H13M0 4.5H13M0 8.5H13M0 12.5H13" stroke="#c4c4c4" stroke-width="1.0" fill="none" shape-rendering="crispEdges"/></svg><div style="position:absolute;top:692.50px;height:14px;line-height:14px;font-size:11px;color:#000;font-weight:normal;white-space:nowrap;letter-spacing:0.3px;left:72.5px;">LD2_NS+NS_A02_exp.fcs</div><div style="position:absolute;top:692.50px;height:14px;line-height:14px;font-size:11px;color:#000;font-weight:normal;white-space:nowrap;letter-spacing:1.0px;right:656.5px;text-align:right;">330780</div><div style="position:absolute;left:2px;top:724.0px;width:677px;height:1px;background:#c9e2f3;"></div><svg style="position:absolute;left:0.5px;top:709.5px;overflow:visible;" width="14" height="14" viewBox="0 0 14 14"><path d="M7 1L13 7 7 13 1 7z" fill="none" stroke="#e2e2e2" stroke-width="1"/></svg><svg style="position:absolute;left:16.4px;top:709.5px;overflow:visible;" width="14" height="14" viewBox="0 0 14 14"><circle cx="7" cy="7" r="6.1" fill="none" stroke="#707070" stroke-width="0.9"/></svg><svg style="position:absolute;left:33px;top:710px;overflow:visible;" width="13" height="13" viewBox="0 0 13 13"><path d="M0.5 0V13M4.5 0V13M8.5 0V13M12.5 0V13M0 0.5H13M0 4.5H13M0 8.5H13M0 12.5H13" stroke="#c4c4c4" stroke-width="1.0" fill="none" shape-rendering="crispEdges"/></svg><div style="position:absolute;top:708.50px;height:14px;line-height:14px;font-size:11px;color:#000;font-weight:normal;white-space:nowrap;letter-spacing:0.3px;left:72.5px;">LD2_NS+PI_C02_exp.fcs</div><div style="position:absolute;top:708.50px;height:14px;line-height:14px;font-size:11px;color:#000;font-weight:normal;white-space:nowrap;letter-spacing:1.0px;right:656.5px;text-align:right;">286306</div><div style="position:absolute;left:2px;top:740.0px;width:677px;height:1px;background:#c9e2f3;"></div><svg style="position:absolute;left:0.5px;top:725.5px;overflow:visible;" width="14" height="14" viewBox="0 0 14 14"><path d="M7 1L13 7 7 13 1 7z" fill="none" stroke="#e2e2e2" stroke-width="1"/></svg><svg style="position:absolute;left:16.4px;top:725.5px;overflow:visible;" width="14" height="14" viewBox="0 0 14 14"><circle cx="7" cy="7" r="6.1" fill="none" stroke="#707070" stroke-width="0.9"/></svg><svg style="position:absolute;left:33px;top:726px;overflow:visible;" width="13" height="13" viewBox="0 0 13 13"><path d="M0.5 0V13M4.5 0V13M8.5 0V13M12.5 0V13M0 0.5H13M0 4.5H13M0 8.5H13M0 12.5H13" stroke="#c4c4c4" stroke-width="1.0" fill="none" shape-rendering="crispEdges"/></svg><div style="position:absolute;top:724.50px;height:14px;line-height:14px;font-size:11px;color:#000;font-weight:normal;white-space:nowrap;letter-spacing:0.3px;left:72.5px;">LD2_PI+NS_B02_exp.fcs</div><div style="position:absolute;top:724.50px;height:14px;line-height:14px;font-size:11px;color:#000;font-weight:normal;white-space:nowrap;letter-spacing:1.0px;right:656.5px;text-align:right;">279202</div><div style="position:absolute;left:2px;top:756.0px;width:677px;height:1px;background:#c9e2f3;"></div><svg style="position:absolute;left:0.5px;top:741.5px;overflow:visible;" width="14" height="14" viewBox="0 0 14 14"><path d="M7 1L13 7 7 13 1 7z" fill="none" stroke="#e2e2e2" stroke-width="1"/></svg><svg style="position:absolute;left:16.4px;top:741.5px;overflow:visible;" width="14" height="14" viewBox="0 0 14 14"><circle cx="7" cy="7" r="6.1" fill="none" stroke="#707070" stroke-width="0.9"/></svg><svg style="position:absolute;left:33px;top:742px;overflow:visible;" width="13" height="13" viewBox="0 0 13 13"><path d="M0.5 0V13M4.5 0V13M8.5 0V13M12.5 0V13M0 0.5H13M0 4.5H13M0 8.5H13M0 12.5H13" stroke="#c4c4c4" stroke-width="1.0" fill="none" shape-rendering="crispEdges"/></svg><div style="position:absolute;top:740.50px;height:14px;line-height:14px;font-size:11px;color:#000;font-weight:normal;white-space:nowrap;letter-spacing:0.3px;left:72.5px;">LD2_PI+PI_D02_exp.fcs</div><div style="position:absolute;top:740.50px;height:14px;line-height:14px;font-size:11px;color:#000;font-weight:normal;white-space:nowrap;letter-spacing:1.0px;right:656.5px;text-align:right;">275465</div><div style="position:absolute;left:2px;top:772.0px;width:677px;height:1px;background:#c9e2f3;"></div><svg style="position:absolute;left:0.5px;top:757.5px;overflow:visible;" width="14" height="14" viewBox="0 0 14 14"><path d="M7 1L13 7 7 13 1 7z" fill="none" stroke="#e2e2e2" stroke-width="1"/></svg><svg style="position:absolute;left:16.4px;top:757.5px;overflow:visible;" width="14" height="14" viewBox="0 0 14 14"><circle cx="7" cy="7" r="6.1" fill="none" stroke="#707070" stroke-width="0.9"/></svg><svg style="position:absolute;left:33px;top:758px;overflow:visible;" width="13" height="13" viewBox="0 0 13 13"><path d="M0.5 0V13M4.5 0V13M8.5 0V13M12.5 0V13M0 0.5H13M0 4.5H13M0 8.5H13M0 12.5H13" stroke="#c4c4c4" stroke-width="1.0" fill="none" shape-rendering="crispEdges"/></svg><div style="position:absolute;top:756.50px;height:14px;line-height:14px;font-size:11px;color:#000;font-weight:normal;white-space:nowrap;letter-spacing:0.3px;left:72.5px;">LD4_NS+NS_A03_exp.fcs</div><div style="position:absolute;top:756.50px;height:14px;line-height:14px;font-size:11px;color:#000;font-weight:normal;white-space:nowrap;letter-spacing:1.0px;right:656.5px;text-align:right;">222740</div><div style="position:absolute;left:2px;top:788.0px;width:677px;height:1px;background:#c9e2f3;"></div><svg style="position:absolute;left:0.5px;top:773.5px;overflow:visible;" width="14" height="14" viewBox="0 0 14 14"><path d="M7 1L13 7 7 13 1 7z" fill="none" stroke="#e2e2e2" stroke-width="1"/></svg><svg style="position:absolute;left:16.4px;top:773.5px;overflow:visible;" width="14" height="14" viewBox="0 0 14 14"><circle cx="7" cy="7" r="6.1" fill="none" stroke="#707070" stroke-width="0.9"/></svg><svg style="position:absolute;left:33px;top:774px;overflow:visible;" width="13" height="13" viewBox="0 0 13 13"><path d="M0.5 0V13M4.5 0V13M8.5 0V13M12.5 0V13M0 0.5H13M0 4.5H13M0 8.5H13M0 12.5H13" stroke="#c4c4c4" stroke-width="1.0" fill="none" shape-rendering="crispEdges"/></svg><div style="position:absolute;top:772.50px;height:14px;line-height:14px;font-size:11px;color:#000;font-weight:normal;white-space:nowrap;letter-spacing:0.3px;left:72.5px;">LD4_NS+PI_C03_exp.fcs</div><div style="position:absolute;top:772.50px;height:14px;line-height:14px;font-size:11px;color:#000;font-weight:normal;white-space:nowrap;letter-spacing:1.0px;right:656.5px;text-align:right;">199393</div><div style="position:absolute;left:2px;top:804.0px;width:677px;height:1px;background:#c9e2f3;"></div><svg style="position:absolute;left:0.5px;top:789.5px;overflow:visible;" width="14" height="14" viewBox="0 0 14 14"><path d="M7 1L13 7 7 13 1 7z" fill="none" stroke="#e2e2e2" stroke-width="1"/></svg><svg style="position:absolute;left:16.4px;top:789.5px;overflow:visible;" width="14" height="14" viewBox="0 0 14 14"><circle cx="7" cy="7" r="6.1" fill="none" stroke="#707070" stroke-width="0.9"/></svg><svg style="position:absolute;left:33px;top:790px;overflow:visible;" width="13" height="13" viewBox="0 0 13 13"><path d="M0.5 0V13M4.5 0V13M8.5 0V13M12.5 0V13M0 0.5H13M0 4.5H13M0 8.5H13M0 12.5H13" stroke="#c4c4c4" stroke-width="1.0" fill="none" shape-rendering="crispEdges"/></svg><div style="position:absolute;top:788.50px;height:14px;line-height:14px;font-size:11px;color:#000;font-weight:normal;white-space:nowrap;letter-spacing:0.3px;left:72.5px;">LD4_PI+NS_B03_exp.fcs</div><div style="position:absolute;top:788.50px;height:14px;line-height:14px;font-size:11px;color:#000;font-weight:normal;white-space:nowrap;letter-spacing:1.0px;right:656.5px;text-align:right;">224146</div><div style="position:absolute;left:2px;top:820.0px;width:677px;height:1px;background:#c9e2f3;"></div><svg style="position:absolute;left:0.5px;top:805.5px;overflow:visible;" width="14" height="14" viewBox="0 0 14 14"><path d="M7 1L13 7 7 13 1 7z" fill="none" stroke="#e2e2e2" stroke-width="1"/></svg><svg style="position:absolute;left:16.4px;top:805.5px;overflow:visible;" width="14" height="14" viewBox="0 0 14 14"><circle cx="7" cy="7" r="6.1" fill="none" stroke="#707070" stroke-width="0.9"/></svg><svg style="position:absolute;left:33px;top:806px;overflow:visible;" width="13" height="13" viewBox="0 0 13 13"><path d="M0.5 0V13M4.5 0V13M8.5 0V13M12.5 0V13M0 0.5H13M0 4.5H13M0 8.5H13M0 12.5H13" stroke="#c4c4c4" stroke-width="1.0" fill="none" shape-rendering="crispEdges"/></svg><div style="position:absolute;top:804.50px;height:14px;line-height:14px;font-size:11px;color:#000;font-weight:normal;white-space:nowrap;letter-spacing:0.3px;left:72.5px;">LD4_PI+PI_D03_exp.fcs</div><div style="position:absolute;top:804.50px;height:14px;line-height:14px;font-size:11px;color:#000;font-weight:normal;white-space:nowrap;letter-spacing:1.0px;right:656.5px;text-align:right;">210530</div><div style="position:absolute;left:2px;top:836.0px;width:677px;height:1px;background:#c9e2f3;"></div><svg style="position:absolute;left:0.5px;top:821.5px;overflow:visible;" width="14" height="14" viewBox="0 0 14 14"><path d="M7 1L13 7 7 13 1 7z" fill="none" stroke="#e2e2e2" stroke-width="1"/></svg><svg style="position:absolute;left:16.4px;top:821.5px;overflow:visible;" width="14" height="14" viewBox="0 0 14 14"><circle cx="7" cy="7" r="6.1" fill="none" stroke="#707070" stroke-width="0.9"/></svg><svg style="position:absolute;left:33px;top:822px;overflow:visible;" width="13" height="13" viewBox="0 0 13 13"><path d="M0.5 0V13M4.5 0V13M8.5 0V13M12.5 0V13M0 0.5H13M0 4.5H13M0 8.5H13M0 12.5H13" stroke="#c4c4c4" stroke-width="1.0" fill="none" shape-rendering="crispEdges"/></svg><div style="position:absolute;top:820.50px;height:14px;line-height:14px;font-size:11px;color:#000;font-weight:normal;white-space:nowrap;letter-spacing:0.3px;left:72.5px;">LD12_NS+NS_A04_exp.fcs</div><div style="position:absolute;top:820.50px;height:14px;line-height:14px;font-size:11px;color:#000;font-weight:normal;white-space:nowrap;letter-spacing:1.0px;right:656.5px;text-align:right;">388463</div><div style="position:absolute;left:2px;top:852.0px;width:677px;height:1px;background:#c9e2f3;"></div><svg style="position:absolute;left:0.5px;top:837.5px;overflow:visible;" width="14" height="14" viewBox="0 0 14 14"><path d="M7 1L13 7 7 13 1 7z" fill="none" stroke="#e2e2e2" stroke-width="1"/></svg><svg style="position:absolute;left:16.4px;top:837.5px;overflow:visible;" width="14" height="14" viewBox="0 0 14 14"><circle cx="7" cy="7" r="6.1" fill="none" stroke="#707070" stroke-width="0.9"/></svg><svg style="position:absolute;left:33px;top:838px;overflow:visible;" width="13" height="13" viewBox="0 0 13 13"><path d="M0.5 0V13M4.5 0V13M8.5 0V13M12.5 0V13M0 0.5H13M0 4.5H13M0 8.5H13M0 12.5H13" stroke="#c4c4c4" stroke-width="1.0" fill="none" shape-rendering="crispEdges"/></svg><div style="position:absolute;top:836.50px;height:14px;line-height:14px;font-size:11px;color:#000;font-weight:normal;white-space:nowrap;letter-spacing:0.3px;left:72.5px;">LD12_NS+PI_C04_exp.fcs</div><div style="position:absolute;top:836.50px;height:14px;line-height:14px;font-size:11px;color:#000;font-weight:normal;white-space:nowrap;letter-spacing:1.0px;right:656.5px;text-align:right;">347208</div><div style="position:absolute;left:2px;top:868.0px;width:677px;height:1px;background:#c9e2f3;"></div><svg style="position:absolute;left:0.5px;top:853.5px;overflow:visible;" width="14" height="14" viewBox="0 0 14 14"><path d="M7 1L13 7 7 13 1 7z" fill="none" stroke="#e2e2e2" stroke-width="1"/></svg><svg style="position:absolute;left:16.4px;top:853.5px;overflow:visible;" width="14" height="14" viewBox="0 0 14 14"><circle cx="7" cy="7" r="6.1" fill="none" stroke="#707070" stroke-width="0.9"/></svg><svg style="position:absolute;left:33px;top:854px;overflow:visible;" width="13" height="13" viewBox="0 0 13 13"><path d="M0.5 0V13M4.5 0V13M8.5 0V13M12.5 0V13M0 0.5H13M0 4.5H13M0 8.5H13M0 12.5H13" stroke="#c4c4c4" stroke-width="1.0" fill="none" shape-rendering="crispEdges"/></svg><div style="position:absolute;top:852.50px;height:14px;line-height:14px;font-size:11px;color:#000;font-weight:normal;white-space:nowrap;letter-spacing:0.3px;left:72.5px;">LD12_PI+NS_B04_exp.fcs</div><div style="position:absolute;top:852.50px;height:14px;line-height:14px;font-size:11px;color:#000;font-weight:normal;white-space:nowrap;letter-spacing:1.0px;right:656.5px;text-align:right;">463536</div><div style="position:absolute;left:2px;top:884.0px;width:677px;height:1px;background:#c9e2f3;"></div><svg style="position:absolute;left:0.5px;top:869.5px;overflow:visible;" width="14" height="14" viewBox="0 0 14 14"><path d="M7 1L13 7 7 13 1 7z" fill="none" stroke="#e2e2e2" stroke-width="1"/></svg><svg style="position:absolute;left:16.4px;top:869.5px;overflow:visible;" width="14" height="14" viewBox="0 0 14 14"><circle cx="7" cy="7" r="6.1" fill="none" stroke="#707070" stroke-width="0.9"/></svg><svg style="position:absolute;left:33px;top:870px;overflow:visible;" width="13" height="13" viewBox="0 0 13 13"><path d="M0.5 0V13M4.5 0V13M8.5 0V13M12.5 0V13M0 0.5H13M0 4.5H13M0 8.5H13M0 12.5H13" stroke="#c4c4c4" stroke-width="1.0" fill="none" shape-rendering="crispEdges"/></svg><div style="position:absolute;top:868.50px;height:14px;line-height:14px;font-size:11px;color:#000;font-weight:normal;white-space:nowrap;letter-spacing:0.3px;left:72.5px;">LD12_PI+PI_D04_exp.fcs</div><div style="position:absolute;top:868.50px;height:14px;line-height:14px;font-size:11px;color:#000;font-weight:normal;white-space:nowrap;letter-spacing:1.0px;right:656.5px;text-align:right;">452399</div><div style="position:absolute;left:2px;top:900.0px;width:677px;height:1px;background:#c9e2f3;"></div><svg style="position:absolute;left:0.5px;top:885.5px;overflow:visible;" width="14" height="14" viewBox="0 0 14 14"><path d="M7 1L13 7 7 13 1 7z" fill="none" stroke="#e2e2e2" stroke-width="1"/></svg><svg style="position:absolute;left:16.4px;top:885.5px;overflow:visible;" width="14" height="14" viewBox="0 0 14 14"><circle cx="7" cy="7" r="6.1" fill="none" stroke="#707070" stroke-width="0.9"/></svg><svg style="position:absolute;left:33px;top:886px;overflow:visible;" width="13" height="13" viewBox="0 0 13 13"><path d="M0.5 0V13M4.5 0V13M8.5 0V13M12.5 0V13M0 0.5H13M0 4.5H13M0 8.5H13M0 12.5H13" stroke="#c4c4c4" stroke-width="1.0" fill="none" shape-rendering="crispEdges"/></svg><div style="position:absolute;top:884.50px;height:14px;line-height:14px;font-size:11px;color:#000;font-weight:normal;white-space:nowrap;letter-spacing:0.3px;left:72.5px;">LD14_NS+NS_A05_exp.fcs</div><div style="position:absolute;top:884.50px;height:14px;line-height:14px;font-size:11px;color:#000;font-weight:normal;white-space:nowrap;letter-spacing:1.0px;right:656.5px;text-align:right;">364117</div><div style="position:absolute;left:2px;top:916.0px;width:677px;height:1px;background:#c9e2f3;"></div><svg style="position:absolute;left:0.5px;top:901.5px;overflow:visible;" width="14" height="14" viewBox="0 0 14 14"><path d="M7 1L13 7 7 13 1 7z" fill="none" stroke="#e2e2e2" stroke-width="1"/></svg><svg style="position:absolute;left:16.4px;top:901.5px;overflow:visible;" width="14" height="14" viewBox="0 0 14 14"><circle cx="7" cy="7" r="6.1" fill="none" stroke="#707070" stroke-width="0.9"/></svg><svg style="position:absolute;left:33px;top:902px;overflow:visible;" width="13" height="13" viewBox="0 0 13 13"><path d="M0.5 0V13M4.5 0V13M8.5 0V13M12.5 0V13M0 0.5H13M0 4.5H13M0 8.5H13M0 12.5H13" stroke="#c4c4c4" stroke-width="1.0" fill="none" shape-rendering="crispEdges"/></svg><div style="position:absolute;top:900.50px;height:14px;line-height:14px;font-size:11px;color:#000;font-weight:normal;white-space:nowrap;letter-spacing:0.3px;left:72.5px;">LD14_NS+PI_C05_exp.fcs</div><div style="position:absolute;top:900.50px;height:14px;line-height:14px;font-size:11px;color:#000;font-weight:normal;white-space:nowrap;letter-spacing:1.0px;right:656.5px;text-align:right;">343027</div><div style="position:absolute;left:2px;top:932.0px;width:677px;height:1px;background:#c9e2f3;"></div><svg style="position:absolute;left:0.5px;top:917.5px;overflow:visible;" width="14" height="14" viewBox="0 0 14 14"><path d="M7 1L13 7 7 13 1 7z" fill="none" stroke="#e2e2e2" stroke-width="1"/></svg><svg style="position:absolute;left:16.4px;top:917.5px;overflow:visible;" width="14" height="14" viewBox="0 0 14 14"><circle cx="7" cy="7" r="6.1" fill="none" stroke="#707070" stroke-width="0.9"/></svg><svg style="position:absolute;left:33px;top:918px;overflow:visible;" width="13" height="13" viewBox="0 0 13 13"><path d="M0.5 0V13M4.5 0V13M8.5 0V13M12.5 0V13M0 0.5H13M0 4.5H13M0 8.5H13M0 12.5H13" stroke="#c4c4c4" stroke-width="1.0" fill="none" shape-rendering="crispEdges"/></svg><div style="position:absolute;top:916.50px;height:14px;line-height:14px;font-size:11px;color:#000;font-weight:normal;white-space:nowrap;letter-spacing:0.3px;left:72.5px;">LD14_PI+NS_B05_exp.fcs</div><div style="position:absolute;top:916.50px;height:14px;line-height:14px;font-size:11px;color:#000;font-weight:normal;white-space:nowrap;letter-spacing:1.0px;right:656.5px;text-align:right;">407999</div><div style="position:absolute;left:2px;top:948.0px;width:677px;height:1px;background:#c9e2f3;"></div><svg style="position:absolute;left:0.5px;top:933.5px;overflow:visible;" width="14" height="14" viewBox="0 0 14 14"><path d="M7 1L13 7 7 13 1 7z" fill="none" stroke="#e2e2e2" stroke-width="1"/></svg><svg style="position:absolute;left:16.4px;top:933.5px;overflow:visible;" width="14" height="14" viewBox="0 0 14 14"><circle cx="7" cy="7" r="6.1" fill="none" stroke="#707070" stroke-width="0.9"/></svg><svg style="position:absolute;left:33px;top:934px;overflow:visible;" width="13" height="13" viewBox="0 0 13 13"><path d="M0.5 0V13M4.5 0V13M8.5 0V13M12.5 0V13M0 0.5H13M0 4.5H13M0 8.5H13M0 12.5H13" stroke="#c4c4c4" stroke-width="1.0" fill="none" shape-rendering="crispEdges"/></svg><div style="position:absolute;top:932.50px;height:14px;line-height:14px;font-size:11px;color:#000;font-weight:normal;white-space:nowrap;letter-spacing:0.3px;left:72.5px;">LD14_PI+PI_D05_exp.fcs</div><div style="position:absolute;top:932.50px;height:14px;line-height:14px;font-size:11px;color:#000;font-weight:normal;white-space:nowrap;letter-spacing:1.0px;right:656.5px;text-align:right;">304383</div><div style="position:absolute;left:333px;top:404.5px;width:1px;height:530.5px;background:#c9e2f3;"></div><div style="position:absolute;left:506px;top:404.5px;width:1px;height:530.5px;background:#c9e2f3;"></div><div style="position:absolute;left:679px;top:404.5px;width:1px;height:530.5px;background:#c9e2f3;"></div></div><div style="position:absolute;left:696px;top:388px;width:1px;height:547px;background:#d0d0d0;"></div><div style="position:absolute;left:-3px;top:935px;width:702px;height:1px;background:#c6c6c6;"></div><div style="position:absolute;left:-3px;top:936px;width:702px;height:1px;background:#fafafa;"></div><div style="position:absolute;left:-3px;top:937px;width:702px;height:1px;background:#9c9c9c;"></div><div style="position:absolute;left:-3px;top:938px;width:702px;height:28px;background:#ececec;"></div></div><div style="position:absolute;left:696.5px;top:90px;width:1px;height:873px;background:rgba(0,0,0,0.18);"></div><div style="position:absolute;left:670px;top:63px;width:29px;height:900px;background:linear-gradient(90deg,rgba(0,0,0,0),rgba(0,0,0,0.09));"></div><div class="clip" style="clip-path:inset(63px 0px 0 700px);"><div style="position:absolute;left:700px;top:59px;width:634px;height:914px;background:#ececec;"></div><div style="position:absolute;left:700px;top:59px;width:634px;height:28px;background:#e8e7e6;border-bottom:1px solid #d0d0d0;box-sizing:border-box;"></div><svg style="position:absolute;left:707.5px;top:65.2px;overflow:visible;" width="13" height="13" viewBox="0 0 13 13"><circle cx="6.5" cy="6.5" r="5.9" fill="#d4d4d4" stroke="#b9b9b9" stroke-width="0.9"/></svg><svg style="position:absolute;left:727.5px;top:65.2px;overflow:visible;" width="13" height="13" viewBox="0 0 13 13"><circle cx="6.5" cy="6.5" r="5.9" fill="#d4d4d4" stroke="#b9b9b9" stroke-width="0.9"/></svg><svg style="position:absolute;left:747.5px;top:65.2px;overflow:visible;" width="13" height="13" viewBox="0 0 13 13"><circle cx="6.5" cy="6.5" r="5.9" fill="#d4d4d4" stroke="#b9b9b9" stroke-width="0.9"/></svg><div style="position:absolute;top:63.00px;height:17px;line-height:17px;font-size:13px;color:#a2a2a2;font-weight:bold;white-space:nowrap;letter-spacing:0.6px;left:867.00px;width:300px;text-align:center;">*unsaved* 13-Dec-2023</div><div style="position:absolute;left:700px;top:87px;width:634px;height:24.5px;background:linear-gradient(#fdfdfd,#f8f8f8);"></div><div style="position:absolute;left:700px;top:111.5px;width:634px;height:22.5px;background:linear-gradient(#f9f9f9,#f1f1f1);"></div><div style="position:absolute;left:749px;top:111px;width:585px;height:1px;background:linear-gradient(90deg,#7aa0d8 0%,#7aa0d8 40%,#d99a86 70%,#d99a86 100%);"></div><div style="position:absolute;left:700px;top:134px;width:634px;height:1px;background:linear-gradient(90deg,#7aa0d8 0%,#8aa0c8 40%,#d99a86 70%,#d99a86 100%);"></div><svg style="position:absolute;left:729px;top:85.5px;overflow:visible;" width="300" height="27" viewBox="0 0 300 27"><path d="M265 0.5 A12.5 12.5 0 0 1 265 25.5" fill="none" stroke="#9db8e0" stroke-width="0.9"/><path d="M0 0.5 A20 24 0 0 1 20 25.5" fill="none" stroke="#7ea6de" stroke-width="0.9"/></svg><svg style="position:absolute;left:705px;top:91px;overflow:visible;" width="38" height="38" viewBox="0 0 38 38"><g transform="translate(19,19) scale(1.0)"><circle cx="0" cy="0" r="19" fill="#353535"/>
<polygon points="0,-12.4 -10.8,8.6 -2.4,12.4" fill="#707070"/>
<polygon points="0,-12.4 -2.4,12.4 10.8,9.2" fill="#9c9c9c"/>
<polygon points="4.2,-3.6 12,-8 12.2,-5.6 4.6,-1.4" fill="#a8161a"/>
<polygon points="4.6,-1.4 12.2,-5.6 12.4,-3.0 5.0,0.8" fill="#e0302a"/>
<polygon points="5.0,0.8 12.4,-3.0 12.6,-0.2 5.4,3.0" fill="#f2642a"/>
<polygon points="-8.2,-1.6 -2.6,0.6 -3.0,2.8 -8.8,0.6" fill="#c62020"/>
<polygon points="-8.8,0.6 -3.0,2.8 -3.4,5.0 -9.4,2.8" fill="#ee5a2a"/></g></svg><svg style="position:absolute;left:753px;top:92.3px;overflow:visible;" width="16" height="12" viewBox="0 0 16 12"><path d="M3 5.8 A6 6.5 0 0 1 14.2 12.2" fill="none" stroke="#e0644a" stroke-width="2.2"/>
<path d="M0 5.5l5-4.5 .5 7z" fill="#e0644a"/></svg><svg style="position:absolute;left:779px;top:92.3px;overflow:visible;" width="16" height="12" viewBox="0 0 16 12"><path d="M13 5.8 A6 6.5 0 0 0 1.8 12.2" fill="none" stroke="#5e5e5e" stroke-width="2.2"/>
<path d="M16 5.5l-5-4.5-.5 7z" fill="#5e5e5e"/></svg><div style="position:absolute;left:806px;top:88px;width:1px;height:21px;background:#cfcfcf;"></div><svg style="position:absolute;left:819px;top:91px;overflow:visible;" width="18.0" height="18.0" viewBox="0 0 18.0 18.0"><g transform="scale(1.0)"><path d="M6.5 1.5h4v13.5a2 2 0 0 1-4 0z" fill="#e6f1f3" stroke="#7fb3bf" stroke-width="1"/>
<path d="M7 2.5h3v2h-3z" fill="#fff"/>
<path d="M12.5 1.5h4.5v13.5a2.25 2.25 0 0 1-4.5 0z" fill="#3f8c9c" stroke="#2b7f90" stroke-width="1"/>
<path d="M13 2.2h3.5v2.5h-3.5z" fill="#e6f1f3"/>
<path d="M1 12h7M4.5 8.5v7.5" stroke="#e0644a" stroke-width="1.6"/></g></svg><svg style="position:absolute;left:845px;top:91px;overflow:visible;" width="17.0" height="16.0" viewBox="0 0 17.0 16.0"><g transform="scale(1.0)" fill="none" stroke="#1d7a8c" stroke-width="1.3">
<path d="M4.5 1C2.6 1 2.3 2 2.3 3.5V6C2.3 7.2 1.6 7.8 0.6 8 1.6 8.2 2.3 8.8 2.3 10V12.5C2.3 14 2.6 15 4.5 15"/>
<path d="M12.5 1C14.4 1 14.7 2 14.7 3.5V6C14.7 7.2 15.4 7.8 16.4 8 15.4 8.2 14.7 8.8 14.7 10V12.5C14.7 14 14.4 15 12.5 15"/>
<path d="M8.5 4.2v7.6M4.7 8h7.6" stroke-width="1.7"/></g></svg><svg style="position:absolute;left:871px;top:91px;overflow:visible;" width="18" height="17" viewBox="0 0 18 17"><path d="M1.5 16C1.5 6 3.5 1 6.5 1S11 6 11.5 16z" fill="#7c7c7c"/>
<path d="M7.5 16C8 6 10 1 12.5 1S17 6 17 16z" fill="#d2d2d2"/>
<path d="M7.6 16C8 8 9.5 3.5 11 2 11.5 6 11.5 11 11.5 16z" fill="#a8a8a8"/></svg><svg style="position:absolute;left:897px;top:91px;overflow:visible;" width="17" height="16" viewBox="0 0 17 16"><path d="M0.5 0V16M4.5 0V16M8.5 0V16M12.5 0V16M16.5 0V16M0 0.5H17M0 3.5H17M0 6.5H17M0 9.5H17M0 12.5H17M0 15.5H17" stroke="#4a97a8" stroke-width="1.0" fill="none" shape-rendering="crispEdges"/></svg><svg style="position:absolute;left:923px;top:91px;overflow:visible;" width="16.0" height="16.0" viewBox="0 0 16.0 16.0"><g transform="scale(1.0)"><path d="M0 0h4v12h12v4H0z" fill="#1d7a8c"/>
<path d="M4 3h-2M4 6h-1.5M4 9h-2M7 12v2M10 12v1.5M13 12v2" stroke="#fff" stroke-width="0.8"/></g></svg><svg style="position:absolute;left:949px;top:91px;overflow:visible;" width="16" height="16" viewBox="0 0 16 16"><circle cx="8" cy="8" r="7.8" fill="#1d7a8c"/>
<path d="M8.5 13.2A5.2 5.2 0 1 1 12.2 5.6" fill="none" stroke="#cfe3e8" stroke-width="1.5"/>
<path d="M10.2 5.6l4.2-0.6-1 4z" fill="#cfe3e8"/></svg><svg style="position:absolute;left:975px;top:91px;overflow:visible;" width="16" height="16" viewBox="0 0 16 16"><circle cx="8" cy="8" r="7.9" fill="#f0891c"/>
<polygon points="1.10,8.60 4.47,7.90 1.63,5.96 5.01,6.60 3.12,3.72 6.00,5.61 5.36,2.23 7.30,5.07 8.00,1.70 8.70,5.07 10.64,2.23 10.00,5.61 12.88,3.72 10.99,6.60 14.37,5.96 11.53,7.90 14.90,8.60 14.20,11.20 11.00,12.80 5.00,12.80 1.80,11.20" fill="#fff"/>
<circle cx="8" cy="11.2" r="1.9" fill="#f0891c"/></svg><div style="position:absolute;top:117.30px;height:14px;line-height:14px;font-size:11px;color:#000;font-weight:normal;white-space:nowrap;letter-spacing:-0.6px;left:762px;">FlowJo</div><div style="position:absolute;top:117.30px;height:14px;line-height:14px;font-size:11px;color:#000;font-weight:normal;white-space:nowrap;left:823px;">File</div><div style="position:absolute;top:117.30px;height:14px;line-height:14px;font-size:11px;color:#000;font-weight:normal;white-space:nowrap;left:870px;">Edit</div><div style="position:absolute;top:117.30px;height:14px;line-height:14px;font-size:11px;color:#000;font-weight:normal;white-space:nowrap;left:918px;">Workspace</div><div style="position:absolute;top:117.30px;height:14px;line-height:14px;font-size:11px;color:#000;font-weight:normal;white-space:nowrap;left:1001px;">Tools</div><div style="position:absolute;top:117.30px;height:14px;line-height:14px;font-size:11px;color:#000;font-weight:normal;white-space:nowrap;left:1057px;">Configure</div><div style="position:absolute;left:906.3px;top:112px;width:1px;height:22px;background:linear-gradient(#f8f8f8,#e8a070);"></div><div style="position:absolute;left:980.8px;top:112px;width:1px;height:22px;background:linear-gradient(#f8f8f8,#e8a070);"></div><svg style="position:absolute;left:1242px;top:116px;overflow:visible;" width="10" height="16" viewBox="0 0 10 16"><path d="M0 0h10v16l-5-4-5 4z" fill="#4f97a7"/><path d="M0 0h10v4L0 10z" fill="#1d7a8c"/></svg><svg style="position:absolute;left:1265px;top:116px;overflow:visible;" width="16.0" height="16.0" viewBox="0 0 16.0 16.0"><g transform="scale(1.0)"><path d="M8 14.5C3 10.5 1 8 1 5a3.5 3.5 0 0 1 7-1 3.5 3.5 0 0 1 7 1c0 3-2 5.5-7 9.5z" fill="none" stroke="#e0644a" stroke-width="1.5"/></g></svg><svg style="position:absolute;left:1294px;top:115px;overflow:visible;" width="12" height="17" viewBox="0 0 12 17"><g transform="translate(0.6,0.8) scale(0.87)"><path d="M2.2 4.5C3.5 2.6 5.2 2 6.8 2 9 2 10.4 3.4 10.4 5.3 10.4 7.3 8.8 8.2 7.6 9 6.6 9.7 6.2 10.4 6.2 11.6V12.5" fill="none" stroke="#1d7a8c" stroke-width="2.2"/><circle cx="6.2" cy="15.6" r="1.6" fill="#1d7a8c"/></g></svg><svg style="position:absolute;left:1315px;top:116px;overflow:visible;" width="12.0" height="16.0" viewBox="0 0 12.0 16.0"><g transform="scale(1.0)"><path d="M0.5 0.5h8l3.5 3.5v12h-11.5z" fill="#fff" stroke="#4f9fb0" stroke-width="1"/>
<path d="M3 5h1M6 5h4M6 8h4M3 8h1" stroke="#4f9fb0" stroke-width="0.9"/>
<path d="M2 12.5h6M5 9.5v6" stroke="#e0644a" stroke-width="1.4"/></g></svg><div style="position:absolute;left:700px;top:134.5px;width:634px;height:100.5px;background:linear-gradient(#f3f3f3,#dedede);"></div><div style="position:absolute;left:700px;top:235px;width:634px;height:1px;background:#707070;"></div><div style="position:absolute;left:700px;top:236px;width:634px;height:1px;background:#f4f4f4;"></div><div style="position:absolute;left:700px;top:237px;width:634px;height:1px;background:#7a7a7a;"></div><svg style="position:absolute;left:708px;top:144px;overflow:visible;" width="32" height="32" viewBox="0 0 32 32"><ellipse cx="9" cy="10" rx="8" ry="7" fill="#777"/><ellipse cx="24" cy="12" rx="7" ry="9" fill="#a9a9a9"/><ellipse cx="14" cy="26" rx="10" ry="6" fill="#b9b9b9"/></svg><div style="position:absolute;top:180.00px;height:14px;line-height:14px;font-size:11px;color:#888;font-weight:normal;white-space:nowrap;left:693.00px;width:60px;text-align:center;">tSNE</div><svg style="position:absolute;left:768px;top:148px;overflow:visible;" width="28" height="26" viewBox="0 0 28 26"><rect x="1" y="1" width="22" height="18" fill="none" stroke="#bbb"/><circle cx="8" cy="9" r="4" fill="#bbb"/><circle cx="12" cy="15" r="3" fill="#ccc"/><circle cx="16" cy="10" r="4.5" fill="none" stroke="#555" stroke-width="1.5"/><path d="M19 14l5 6" stroke="#555" stroke-width="2"/></svg><div style="position:absolute;top:180.00px;height:14px;line-height:14px;font-size:11px;color:#888;font-weight:normal;white-space:nowrap;left:752.00px;width:60px;text-align:center;">Cluster</div><div style="position:absolute;top:193.00px;height:14px;line-height:14px;font-size:11px;color:#888;font-weight:normal;white-space:nowrap;left:752.00px;width:60px;text-align:center;">Explorer</div><svg style="position:absolute;left:822px;top:143px;overflow:visible;" width="34" height="34" viewBox="0 0 34 34"><ellipse cx="10" cy="11" rx="9" ry="8" fill="#fff" stroke="#1d7a8c" stroke-width="1.5"/><text x="7" y="15" font-size="10" fill="#1d7a8c" font-family="Liberation Sans">?</text><ellipse cx="26" cy="12" rx="6" ry="9" fill="#fff" stroke="#e0644a" stroke-width="1.5"/><text x="23" y="17" font-size="9" fill="#e0644a" font-family="Liberation Sans">?</text><ellipse cx="14" cy="28" rx="10" ry="5" fill="#fff" stroke="#5aa0b0" stroke-width="1.3"/><text x="11.5" y="31" font-size="8" fill="#5aa0b0" font-family="Liberation Sans">?</text></svg><div style="position:absolute;top:180.00px;height:14px;line-height:14px;font-size:11px;color:#000;font-weight:normal;white-space:nowrap;left:809.00px;width:60px;text-align:center;">MEM</div><svg style="position:absolute;left:835px;top:198.5px;overflow:visible;" width="8" height="5" viewBox="0 0 8 5"><path d="M0.5 0.5L4 4 7.5 0.5" fill="none" stroke="#333" stroke-width="1.1"/></svg><svg style="position:absolute;left:869px;top:140px;overflow:visible;" width="16" height="14" viewBox="0 0 16 14"><rect x="0" y="1" width="3" height="12" fill="#777"/><rect x="4" y="1" width="3" height="12" fill="#999"/><circle cx="10" cy="7" r="0.8" fill="#888"/><rect x="13" y="0" width="1.2" height="14" fill="#888"/></svg><div style="position:absolute;top:139.50px;height:14px;line-height:14px;font-size:11px;color:#999;font-weight:normal;white-space:nowrap;left:888px;">Embed</div><svg style="position:absolute;left:868px;top:166px;overflow:visible;" width="20" height="20" viewBox="0 0 20 20"><path d="M3 6h4a2.5 2.5 0 1 1 5 0h4v4a2.5 2.5 0 1 1 0 5v4H3v-4a2.5 2.5 0 1 0 0-5z" fill="#fff" stroke="#8fc0cc" stroke-width="1"/></svg><div style="position:absolute;top:168.50px;height:14px;line-height:14px;font-size:11px;color:#000;font-weight:normal;white-space:nowrap;left:888px;">Plugins</div><svg style="position:absolute;left:928px;top:173.5px;overflow:visible;" width="8" height="5" viewBox="0 0 8 5"><path d="M0.5 0.5L4 4 7.5 0.5" fill="none" stroke="#333" stroke-width="1.1"/></svg><div style="position:absolute;left:703px;top:217.5px;width:238px;height:1px;background:linear-gradient(90deg,rgba(170,140,200,0.1),rgba(150,110,190,0.75) 50%,rgba(170,140,200,0.1));"></div><div style="position:absolute;top:218.30px;height:14px;line-height:14px;font-size:11px;color:#000;font-weight:normal;white-space:nowrap;left:772.50px;width:100px;text-align:center;">Algorithms</div><div style="position:absolute;left:943px;top:134.5px;width:1px;height:98.5px;background:#8c8c8c;"></div><svg style="position:absolute;left:968px;top:144px;overflow:visible;" width="34" height="34" viewBox="0 0 34 34"><path d="M8 3.5H32M31 2.5V7M9 4L19 17.5 9 31M8 31H32M31 31V27" fill="none" stroke="#787878" stroke-width="3"/><path d="M2 26H16M9 19V33" stroke="#787878" stroke-width="2.6"/></svg><div style="position:absolute;top:180.00px;height:14px;line-height:14px;font-size:11px;color:#888;font-weight:normal;white-space:nowrap;left:945.00px;width:80px;text-align:center;">Add</div><div style="position:absolute;top:193.00px;height:14px;line-height:14px;font-size:11px;color:#888;font-weight:normal;white-space:nowrap;left:945.00px;width:80px;text-align:center;">Statistic...</div><svg style="position:absolute;left:1034px;top:144px;overflow:visible;" width="32" height="32" viewBox="0 0 32 32"><path d="M1 32 C8 30 9 2 16 2 S24 30 31 32" fill="#dcdcdc" stroke="#888" stroke-width="1.2"/><path d="M16 2v30" stroke="#888" stroke-width="1.5"/></svg><svg style="position:absolute;left:1080px;top:144px;overflow:visible;" width="32" height="32" viewBox="0 0 32 32"><path d="M1 32 C8 30 9 2 16 2 S24 30 31 32" fill="#dcdcdc" stroke="#888" stroke-width="1.2"/><path d="M6 2v10M26 2v10M6 6h20" stroke="#888" stroke-width="2"/></svg><svg style="position:absolute;left:1128px;top:144px;overflow:visible;" width="32" height="32" viewBox="0 0 32 32"><path d="M1 32 C8 30 9 2 16 2 S24 30 31 32" fill="#dcdcdc" stroke="#888" stroke-width="1.2"/><text x="8.5" y="27" font-size="15" fill="#8a8a8a" font-family="Liberation Sans">%</text></svg><div style="position:absolute;top:180.50px;height:14px;line-height:14px;font-size:11px;color:#888;font-weight:normal;white-space:nowrap;left:1010.00px;width:80px;text-align:center;">Median</div><svg style="position:absolute;left:1046px;top:198.5px;overflow:visible;" width="8" height="5" viewBox="0 0 8 5"><path d="M0.5 0.5L4 4 7.5 0.5" fill="none" stroke="#888" stroke-width="1.1"/></svg><div style="position:absolute;top:180.50px;height:14px;line-height:14px;font-size:11px;color:#888;font-weight:normal;white-space:nowrap;left:1056.00px;width:80px;text-align:center;">CV</div><svg style="position:absolute;left:1092px;top:198.5px;overflow:visible;" width="8" height="5" viewBox="0 0 8 5"><path d="M0.5 0.5L4 4 7.5 0.5" fill="none" stroke="#888" stroke-width="1.1"/></svg><div style="position:absolute;top:180.50px;height:14px;line-height:14px;font-size:11px;color:#888;font-weight:normal;white-space:nowrap;left:1104.00px;width:80px;text-align:center;">Freq.</div><div style="position:absolute;top:193.00px;height:14px;line-height:14px;font-size:11px;color:#888;font-weight:normal;white-space:nowrap;left:1098.00px;width:80px;text-align:center;">of</div><svg style="position:absolute;left:1147px;top:197.5px;overflow:visible;" width="8" height="5" viewBox="0 0 8 5"><path d="M0.5 0.5L4 4 7.5 0.5" fill="none" stroke="#888" stroke-width="1.1"/></svg><div style="position:absolute;left:948px;top:217.5px;width:220px;height:1px;background:linear-gradient(90deg,rgba(170,140,200,0.1),rgba(150,110,190,0.75) 50%,rgba(170,140,200,0.1));"></div><div style="position:absolute;top:218.30px;height:14px;line-height:14px;font-size:11px;color:#000;font-weight:normal;white-space:nowrap;left:1007.50px;width:100px;text-align:center;">Statistics</div><div style="position:absolute;left:1169px;top:134.5px;width:1px;height:98.5px;background:#8c8c8c;"></div><svg style="position:absolute;left:1188px;top:152px;overflow:visible;" width="36" height="36" viewBox="0 0 36 36"><defs><clipPath id="cpB"><circle cx="13.5" cy="13.2" r="12.3"/></clipPath></defs><circle cx="13.5" cy="13.2" r="12.3" fill="#8fbdc7" stroke="#2a8193" stroke-width="0.9"/><circle cx="24" cy="23.7" r="9" fill="#4a95a3" stroke="#2a8193" stroke-width="0.9"/><circle cx="7.5" cy="26.4" r="6.3" fill="#d3e7eb" stroke="#2a8193" stroke-width="0.9"/><g clip-path="url(#cpB)"><circle cx="24" cy="23.7" r="9" fill="#e0644a" stroke="#2a8193" stroke-width="0.9"/><circle cx="7.5" cy="26.4" r="6.3" fill="#e0644a" stroke="#2a8193" stroke-width="0.9"/></g></svg><div style="position:absolute;top:188.50px;height:14px;line-height:14px;font-size:11px;color:#000;font-weight:normal;white-space:nowrap;left:1160.50px;width:90px;text-align:center;">Populations</div><svg style="position:absolute;left:1201.5px;top:206.5px;overflow:visible;" width="8" height="5" viewBox="0 0 8 5"><path d="M0.5 0.5L4 4 7.5 0.5" fill="none" stroke="#333" stroke-width="1.1"/></svg><div style="position:absolute;left:1238px;top:134.5px;width:1px;height:98.5px;background:#8c8c8c;"></div><svg style="position:absolute;left:1252px;top:152px;overflow:visible;" width="34" height="34" viewBox="0 0 34 34"><circle cx="10" cy="10" r="9" fill="#1d7a8c"/><circle cx="6.8" cy="5.8" r="1.9" fill="#fff"/><path d="M14.5 12.5L33 29.5 29.5 33 27.5 32 26.5 30 25 30 24 28.5 22.5 28.5 21.5 27 20 27 19 25.5 17.5 25.5 11.5 16.5z" fill="#1d7a8c"/><path d="M17 15.5L31 29" stroke="#a6cfd8" stroke-width="1.6"/></svg><div style="position:absolute;top:188.50px;height:14px;line-height:14px;font-size:11px;color:#000;font-weight:normal;white-space:nowrap;left:1224.50px;width:90px;text-align:center;">Keywords</div><svg style="position:absolute;left:1265.5px;top:206.5px;overflow:visible;" width="8" height="5" viewBox="0 0 8 5"><path d="M0.5 0.5L4 4 7.5 0.5" fill="none" stroke="#333" stroke-width="1.1"/></svg><div style="position:absolute;left:1297px;top:134.5px;width:1px;height:98.5px;background:#8c8c8c;"></div><div style="position:absolute;left:700px;top:238px;width:634px;height:135.5px;background:#fff;"></div><div style="position:absolute;left:700px;top:373px;width:634px;height:1px;background:#8a8a8a;"></div><div style="position:absolute;left:700px;top:374px;width:634px;height:9.5px;background:#fafafa;"></div><div style="position:absolute;left:700px;top:383px;width:634px;height:1px;background:#9a9a9a;"></div><svg style="position:absolute;left:703px;top:377.5px;overflow:visible;" width="20" height="6" viewBox="0 0 20 6"><path d="M0 5.5L3.5 0.5 7 5.5z" fill="#8a8a8a"/><path d="M11 0.5h7L14.5 5.5z" fill="#8a8a8a"/></svg><svg style="position:absolute;left:1012.75px;top:376px;overflow:visible;" width="6" height="6" viewBox="0 0 6 6"><circle cx="3" cy="3" r="2.8" fill="#dcdcdc"/></svg><div style="position:absolute;left:703px;top:239px;width:625.5px;height:15px;background:#fff;"></div><div style="position:absolute;left:703px;top:253.5px;width:625.5px;height:1.5px;background:#7a7a7a;"></div><div style="position:absolute;left:1070.75px;top:239px;width:1px;height:15px;background:#8a8a8a;"></div><div style="position:absolute;left:1110.75px;top:239px;width:1px;height:15px;background:#8a8a8a;"></div><div style="position:absolute;left:1327.5px;top:239px;width:1.5px;height:15px;background:#9a9a9a;"></div><div style="position:absolute;top:239.50px;height:15px;line-height:15px;font-size:11.5px;color:#000;font-weight:normal;white-space:nowrap;letter-spacing:0.2px;left:706px;">Group</div><div style="position:absolute;top:239.50px;height:15px;line-height:15px;font-size:11.5px;color:#000;font-weight:normal;white-space:nowrap;letter-spacing:0.1px;left:1074.25px;">Size</div><div style="position:absolute;top:239.50px;height:15px;line-height:15px;font-size:11.5px;color:#000;font-weight:normal;white-space:nowrap;letter-spacing:0.1px;left:1114.25px;">Role</div><div style="position:absolute;left:703px;top:269.5px;width:625.5px;height:1px;background:#c9e2f3;"></div><svg style="position:absolute;left:726px;top:256.0px;overflow:visible;" width="21" height="13" viewBox="0 0 21 13"><path d="M4 0.8C2.3 0.8 2.2 1.6 2.2 3V5C2.2 5.8 1.6 6.3 0.6 6.5 1.6 6.7 2.2 7.2 2.2 8V10C2.2 11.4 2.3 12.2 4 12.2" fill="none" stroke="#222" stroke-width="0.9"/><g transform="translate(21,0) scale(-1,1)"><path d="M4 0.8C2.3 0.8 2.2 1.6 2.2 3V5C2.2 5.8 1.6 6.3 0.6 6.5 1.6 6.7 2.2 7.2 2.2 8V10C2.2 11.4 2.3 12.2 4 12.2" fill="none" stroke="#222" stroke-width="0.9"/></g><rect x="8" y="1.5" width="5" height="10" fill="#fff" stroke="#b0b0b0" stroke-width="0.8"/><path d="M7.5 1.4H13.5" stroke="#333" stroke-width="1"/><rect x="8.5" y="7.5" width="4" height="3.8" fill="#e8401c"/><rect x="9.5" y="7.5" width="2" height="3" fill="#f6c21a"/></svg><div style="position:absolute;top:255.00px;height:14px;line-height:14px;font-size:11px;color:#111;font-weight:bold;white-space:nowrap;letter-spacing:0.25px;left:752px;">All Samples</div><div style="position:absolute;top:255.00px;height:14px;line-height:14px;font-size:11px;color:#000;font-weight:normal;white-space:nowrap;letter-spacing:1.0px;right:225.25px;text-align:right;">46</div><div style="position:absolute;top:255.00px;height:14px;line-height:14px;font-size:11px;color:#000;font-weight:normal;white-space:nowrap;letter-spacing:0.5px;right:9.0px;text-align:right;">Test</div><div style="position:absolute;left:703px;top:285.5px;width:625.5px;height:1px;background:#c9e2f3;"></div><svg style="position:absolute;left:726px;top:272.0px;overflow:visible;" width="21" height="13" viewBox="0 0 21 13"><path d="M4 0.8C2.3 0.8 2.2 1.6 2.2 3V5C2.2 5.8 1.6 6.3 0.6 6.5 1.6 6.7 2.2 7.2 2.2 8V10C2.2 11.4 2.3 12.2 4 12.2" fill="none" stroke="#222" stroke-width="0.9"/><g transform="translate(21,0) scale(-1,1)"><path d="M4 0.8C2.3 0.8 2.2 1.6 2.2 3V5C2.2 5.8 1.6 6.3 0.6 6.5 1.6 6.7 2.2 7.2 2.2 8V10C2.2 11.4 2.3 12.2 4 12.2" fill="none" stroke="#222" stroke-width="0.9"/></g><rect x="5.5" y="2" width="10" height="9" fill="#fff" stroke="#111" stroke-width="1.1"/><path d="M8.8 2v9M12.2 2v9M5.5 5h10M5.5 8h10" stroke="#111" stroke-width="1"/></svg><div style="position:absolute;top:271.00px;height:14px;line-height:14px;font-size:11px;color:#c8281e;font-weight:bold;white-space:nowrap;letter-spacing:0.25px;left:752px;">Compensation</div><div style="position:absolute;top:271.00px;height:14px;line-height:14px;font-size:11px;color:#000;font-weight:normal;white-space:nowrap;letter-spacing:1.0px;right:225.25px;text-align:right;">12</div><div style="position:absolute;top:271.00px;height:14px;line-height:14px;font-size:11px;color:#000;font-weight:normal;white-space:nowrap;letter-spacing:0.5px;right:9.0px;text-align:right;">Compensation</div><svg style="position:absolute;left:710px;top:274.5px;overflow:visible;" width="12" height="8" viewBox="0 0 12 8"><path d="M0 0h11L5.5 7z" fill="#111"/></svg><div style="position:absolute;left:703px;top:301.5px;width:625.5px;height:1px;background:#c9e2f3;"></div><svg style="position:absolute;left:742px;top:288px;overflow:visible;" width="13" height="13" viewBox="0 0 13 13"><rect x="0" y="0" width="13" height="13" fill="#e6f9fc" stroke="none"/><path d="M0.5 0V13M4.5 0V13M8.5 0V13M12.5 0V13M0 0.5H13M0 4.5H13M0 8.5H13M0 12.5H13" stroke="#c8281e" stroke-width="1.2" fill="none" shape-rendering="crispEdges"/></svg><div style="position:absolute;top:287.00px;height:14px;line-height:14px;font-size:11px;color:#c8281e;font-weight:bold;white-space:nowrap;letter-spacing:0.25px;left:758.6px;">Compensation</div><div style="position:absolute;left:703px;top:302.5px;width:625.5px;height:15.5px;background:#e0e0e0;"></div><div style="position:absolute;left:703px;top:317.5px;width:625.5px;height:1px;background:#c9e2f3;"></div><svg style="position:absolute;left:726px;top:304.0px;overflow:visible;" width="21" height="13" viewBox="0 0 21 13"><path d="M4 0.8C2.3 0.8 2.2 1.6 2.2 3V5C2.2 5.8 1.6 6.3 0.6 6.5 1.6 6.7 2.2 7.2 2.2 8V10C2.2 11.4 2.3 12.2 4 12.2" fill="none" stroke="#222" stroke-width="0.9"/><g transform="translate(21,0) scale(-1,1)"><path d="M4 0.8C2.3 0.8 2.2 1.6 2.2 3V5C2.2 5.8 1.6 6.3 0.6 6.5 1.6 6.7 2.2 7.2 2.2 8V10C2.2 11.4 2.3 12.2 4 12.2" fill="none" stroke="#222" stroke-width="0.9"/></g><rect x="8" y="1.5" width="5" height="10" fill="#fff" stroke="#b0b0b0" stroke-width="0.8"/><path d="M7.5 1.4H13.5" stroke="#333" stroke-width="1"/><rect x="8.5" y="7.5" width="4" height="3.8" fill="#e8401c"/><rect x="9.5" y="7.5" width="2" height="3" fill="#f6c21a"/></svg><div style="position:absolute;top:303.00px;height:14px;line-height:14px;font-size:11px;color:#1b9a9c;font-weight:bold;white-space:nowrap;letter-spacing:0.25px;left:752px;">Gating Group</div><div style="position:absolute;top:303.00px;height:14px;line-height:14px;font-size:11px;color:#000;font-weight:normal;white-space:nowrap;letter-spacing:1.0px;right:225.25px;text-align:right;">34</div><div style="position:absolute;top:303.00px;height:14px;line-height:14px;font-size:11px;color:#000;font-weight:normal;white-space:nowrap;letter-spacing:0.5px;right:9.0px;text-align:right;">None</div><div style="position:absolute;left:703px;top:333.5px;width:625.5px;height:1px;background:#c9e2f3;"></div><svg style="position:absolute;left:726px;top:320.0px;overflow:visible;" width="21" height="13" viewBox="0 0 21 13"><path d="M4 0.8C2.3 0.8 2.2 1.6 2.2 3V5C2.2 5.8 1.6 6.3 0.6 6.5 1.6 6.7 2.2 7.2 2.2 8V10C2.2 11.4 2.3 12.2 4 12.2" fill="none" stroke="#222" stroke-width="0.9"/><g transform="translate(21,0) scale(-1,1)"><path d="M4 0.8C2.3 0.8 2.2 1.6 2.2 3V5C2.2 5.8 1.6 6.3 0.6 6.5 1.6 6.7 2.2 7.2 2.2 8V10C2.2 11.4 2.3 12.2 4 12.2" fill="none" stroke="#222" stroke-width="0.9"/></g><rect x="8" y="1.5" width="5" height="10" fill="#fff" stroke="#b0b0b0" stroke-width="0.8"/><path d="M7.5 1.4H13.5" stroke="#333" stroke-width="1"/><rect x="8.5" y="7.5" width="4" height="3.8" fill="#e8401c"/><rect x="9.5" y="7.5" width="2" height="3" fill="#f6c21a"/></svg><div style="position:absolute;top:319.00px;height:14px;line-height:14px;font-size:11px;color:#1010d0;font-weight:bold;white-space:nowrap;letter-spacing:0.25px;left:752px;">PFICSCompRun1</div><div style="position:absolute;top:319.00px;height:14px;line-height:14px;font-size:11px;color:#000;font-weight:normal;white-space:nowrap;letter-spacing:1.0px;right:225.25px;text-align:right;">46</div><div style="position:absolute;top:319.00px;height:14px;line-height:14px;font-size:11px;color:#000;font-weight:normal;white-space:nowrap;letter-spacing:0.5px;right:9.0px;text-align:right;">Test</div><div style="position:absolute;left:1070.75px;top:255px;width:1px;height:79.5px;background:#c9e2f3;"></div><div style="position:absolute;left:1110.75px;top:255px;width:1px;height:79.5px;background:#c9e2f3;"></div><div style="position:absolute;left:1328.5px;top:255px;width:1px;height:79.5px;background:#c9e2f3;"></div><div style="position:absolute;left:700px;top:384px;width:634px;height:551px;background:#fff;"></div><div style="position:absolute;left:705.5px;top:386px;width:307.0px;height:14.5px;background:#fff;border-top:1px solid #c8c8c8;border-left:1px solid #c8c8c8;border-right:1.5px solid #555;border-bottom:1.5px solid #555;box-sizing:border-box;"></div><div style="position:absolute;top:386.30px;height:14px;line-height:14px;font-size:11px;color:#000;font-weight:normal;white-space:nowrap;letter-spacing:0.2px;left:801.00px;width:100px;text-align:center;">Name</div><svg style="position:absolute;left:870.0px;top:389.5px;overflow:visible;" width="12" height="7" viewBox="0 0 12 7"><path d="M0 6.5L5.5 0.5 11 6.5z" fill="#111"/></svg><div style="position:absolute;left:1015.0px;top:386px;width:148.0px;height:14.5px;background:#fff;border-top:1px solid #c8c8c8;border-left:1px solid #c8c8c8;border-right:1.5px solid #555;border-bottom:1.5px solid #555;box-sizing:border-box;"></div><div style="position:absolute;top:386.30px;height:14px;line-height:14px;font-size:11px;color:#000;font-weight:normal;white-space:nowrap;letter-spacing:0.45px;left:1014.00px;width:150px;text-align:center;">Statistic</div><div style="position:absolute;left:1164.5px;top:386px;width:148.5px;height:14.5px;background:#fff;border-top:1px solid #c8c8c8;border-left:1px solid #c8c8c8;border-right:1.5px solid #555;border-bottom:1.5px solid #555;box-sizing:border-box;"></div><div style="position:absolute;top:386.30px;height:14px;line-height:14px;font-size:11px;color:#000;font-weight:normal;white-space:nowrap;letter-spacing:0.45px;left:1163.75px;width:150px;text-align:center;">#Cells</div><div style="position:absolute;left:1314px;top:400.5px;width:19px;height:534.5px;background:linear-gradient(90deg,#f7f7f7,#ececec);border-left:1px solid #e4e4e4;box-sizing:border-box;"></div><div style="position:absolute;left:1318px;top:399px;width:8px;height:520.5px;background:#c4c4c4;border-radius:4px;"></div><div class="clip" style="clip-path:inset(400.5px 0 28px 0);"><div style="position:absolute;left:704.5px;top:416.0px;width:608.5px;height:1px;background:#c9e2f3;"></div><svg style="position:absolute;left:703.5px;top:401.5px;overflow:visible;" width="14" height="14" viewBox="0 0 14 14"><path d="M7 1L13 7 7 13 1 7z" fill="none" stroke="#e2e2e2" stroke-width="1"/></svg><svg style="position:absolute;left:719.4px;top:401.5px;overflow:visible;" width="14" height="14" viewBox="0 0 14 14"><circle cx="7" cy="7" r="6.1" fill="none" stroke="#707070" stroke-width="0.9"/></svg><svg style="position:absolute;left:736px;top:402px;overflow:visible;" width="13" height="13" viewBox="0 0 13 13"><path d="M0.5 0V13M4.5 0V13M8.5 0V13M12.5 0V13M0 0.5H13M0 4.5H13M0 8.5H13M0 12.5H13" stroke="#c8281e" stroke-width="1.0" fill="none" shape-rendering="crispEdges"/></svg><div style="position:absolute;top:400.50px;height:14px;line-height:14px;font-size:11px;color:#000;font-weight:normal;white-space:nowrap;letter-spacing:0.3px;left:775.5px;">FMOs NS+PI_No CD4_C12_exp.fcs</div><div style="position:absolute;top:400.50px;height:14px;line-height:14px;font-size:11px;color:#000;font-weight:normal;white-space:nowrap;letter-spacing:1.0px;right:22.5px;text-align:right;">219336</div><div style="position:absolute;left:704.5px;top:432.0px;width:608.5px;height:1px;background:#c9e2f3;"></div><svg style="position:absolute;left:703.5px;top:417.5px;overflow:visible;" width="14" height="14" viewBox="0 0 14 14"><path d="M7 1L13 7 7 13 1 7z" fill="none" stroke="#e2e2e2" stroke-width="1"/></svg><svg style="position:absolute;left:719.4px;top:417.5px;overflow:visible;" width="14" height="14" viewBox="0 0 14 14"><circle cx="7" cy="7" r="6.1" fill="none" stroke="#707070" stroke-width="0.9"/></svg><svg style="position:absolute;left:736px;top:418px;overflow:visible;" width="13" height="13" viewBox="0 0 13 13"><path d="M0.5 0V13M4.5 0V13M8.5 0V13M12.5 0V13M0 0.5H13M0 4.5H13M0 8.5H13M0 12.5H13" stroke="#c8281e" stroke-width="1.0" fill="none" shape-rendering="crispEdges"/></svg><div style="position:absolute;top:416.50px;height:14px;line-height:14px;font-size:11px;color:#000;font-weight:normal;white-space:nowrap;letter-spacing:0.3px;left:775.5px;">FMOs NS+PI_No CD8_C11_exp.fcs</div><div style="position:absolute;top:416.50px;height:14px;line-height:14px;font-size:11px;color:#000;font-weight:normal;white-space:nowrap;letter-spacing:1.0px;right:22.5px;text-align:right;">269027</div><div style="position:absolute;left:704.5px;top:448.0px;width:608.5px;height:1px;background:#c9e2f3;"></div><svg style="position:absolute;left:703.5px;top:433.5px;overflow:visible;" width="14" height="14" viewBox="0 0 14 14"><path d="M7 1L13 7 7 13 1 7z" fill="none" stroke="#e2e2e2" stroke-width="1"/></svg><svg style="position:absolute;left:719.4px;top:433.5px;overflow:visible;" width="14" height="14" viewBox="0 0 14 14"><circle cx="7" cy="7" r="6.1" fill="none" stroke="#707070" stroke-width="0.9"/></svg><svg style="position:absolute;left:736px;top:434px;overflow:visible;" width="13" height="13" viewBox="0 0 13 13"><path d="M0.5 0V13M4.5 0V13M8.5 0V13M12.5 0V13M0 0.5H13M0 4.5H13M0 8.5H13M0 12.5H13" stroke="#c8281e" stroke-width="1.0" fill="none" shape-rendering="crispEdges"/></svg><div style="position:absolute;top:432.50px;height:14px;line-height:14px;font-size:11px;color:#000;font-weight:normal;white-space:nowrap;letter-spacing:0.3px;left:775.5px;">FMOs NS+PI_No DR_C07_exp.fcs</div><div style="position:absolute;top:432.50px;height:14px;line-height:14px;font-size:11px;color:#000;font-weight:normal;white-space:nowrap;letter-spacing:1.0px;right:22.5px;text-align:right;">281200</div><div style="position:absolute;left:704.5px;top:464.0px;width:608.5px;height:1px;background:#c9e2f3;"></div><svg style="position:absolute;left:703.5px;top:449.5px;overflow:visible;" width="14" height="14" viewBox="0 0 14 14"><path d="M7 1L13 7 7 13 1 7z" fill="none" stroke="#e2e2e2" stroke-width="1"/></svg><svg style="position:absolute;left:719.4px;top:449.5px;overflow:visible;" width="14" height="14" viewBox="0 0 14 14"><circle cx="7" cy="7" r="6.1" fill="none" stroke="#707070" stroke-width="0.9"/></svg><svg style="position:absolute;left:736px;top:450px;overflow:visible;" width="13" height="13" viewBox="0 0 13 13"><path d="M0.5 0V13M4.5 0V13M8.5 0V13M12.5 0V13M0 0.5H13M0 4.5H13M0 8.5H13M0 12.5H13" stroke="#c8281e" stroke-width="1.0" fill="none" shape-rendering="crispEdges"/></svg><div style="position:absolute;top:448.50px;height:14px;line-height:14px;font-size:11px;color:#000;font-weight:normal;white-space:nowrap;letter-spacing:0.3px;left:775.5px;">FMOs NS+PI_No IFN_C08_exp.fcs</div><div style="position:absolute;top:448.50px;height:14px;line-height:14px;font-size:11px;color:#000;font-weight:normal;white-space:nowrap;letter-spacing:1.0px;right:22.5px;text-align:right;">249824</div><div style="position:absolute;left:704.5px;top:480.0px;width:608.5px;height:1px;background:#c9e2f3;"></div><svg style="position:absolute;left:703.5px;top:465.5px;overflow:visible;" width="14" height="14" viewBox="0 0 14 14"><path d="M7 1L13 7 7 13 1 7z" fill="none" stroke="#e2e2e2" stroke-width="1"/></svg><svg style="position:absolute;left:719.4px;top:465.5px;overflow:visible;" width="14" height="14" viewBox="0 0 14 14"><circle cx="7" cy="7" r="6.1" fill="none" stroke="#707070" stroke-width="0.9"/></svg><svg style="position:absolute;left:736px;top:466px;overflow:visible;" width="13" height="13" viewBox="0 0 13 13"><path d="M0.5 0V13M4.5 0V13M8.5 0V13M12.5 0V13M0 0.5H13M0 4.5H13M0 8.5H13M0 12.5H13" stroke="#c8281e" stroke-width="1.0" fill="none" shape-rendering="crispEdges"/></svg><div style="position:absolute;top:464.50px;height:14px;line-height:14px;font-size:11px;color:#000;font-weight:normal;white-space:nowrap;letter-spacing:0.3px;left:775.5px;">FMOs NS+PI_No Perf_C09_exp.fcs</div><div style="position:absolute;top:464.50px;height:14px;line-height:14px;font-size:11px;color:#000;font-weight:normal;white-space:nowrap;letter-spacing:1.0px;right:22.5px;text-align:right;">276464</div><div style="position:absolute;left:704.5px;top:496.0px;width:608.5px;height:1px;background:#c9e2f3;"></div><svg style="position:absolute;left:703.5px;top:481.5px;overflow:visible;" width="14" height="14" viewBox="0 0 14 14"><path d="M7 1L13 7 7 13 1 7z" fill="none" stroke="#e2e2e2" stroke-width="1"/></svg><svg style="position:absolute;left:719.4px;top:481.5px;overflow:visible;" width="14" height="14" viewBox="0 0 14 14"><circle cx="7" cy="7" r="6.1" fill="none" stroke="#707070" stroke-width="0.9"/></svg><svg style="position:absolute;left:736px;top:482px;overflow:visible;" width="13" height="13" viewBox="0 0 13 13"><path d="M0.5 0V13M4.5 0V13M8.5 0V13M12.5 0V13M0 0.5H13M0 4.5H13M0 8.5H13M0 12.5H13" stroke="#c8281e" stroke-width="1.0" fill="none" shape-rendering="crispEdges"/></svg><div style="position:absolute;top:480.50px;height:14px;line-height:14px;font-size:11px;color:#000;font-weight:normal;white-space:nowrap;letter-spacing:0.3px;left:775.5px;">FMOs NS+PI_No p-ERK_C10_exp.fcs</div><div style="position:absolute;top:480.50px;height:14px;line-height:14px;font-size:11px;color:#000;font-weight:normal;white-space:nowrap;letter-spacing:1.0px;right:22.5px;text-align:right;">254708</div><div style="position:absolute;left:704.5px;top:512.0px;width:608.5px;height:1px;background:#c9e2f3;"></div><svg style="position:absolute;left:703.5px;top:497.5px;overflow:visible;" width="14" height="14" viewBox="0 0 14 14"><path d="M7 1L13 7 7 13 1 7z" fill="none" stroke="#e2e2e2" stroke-width="1"/></svg><svg style="position:absolute;left:719.4px;top:497.5px;overflow:visible;" width="14" height="14" viewBox="0 0 14 14"><circle cx="7" cy="7" r="6.1" fill="none" stroke="#707070" stroke-width="0.9"/></svg><svg style="position:absolute;left:736px;top:498px;overflow:visible;" width="13" height="13" viewBox="0 0 13 13"><path d="M0.5 0V13M4.5 0V13M8.5 0V13M12.5 0V13M0 0.5H13M0 4.5H13M0 8.5H13M0 12.5H13" stroke="#c8281e" stroke-width="1.0" fill="none" shape-rendering="crispEdges"/></svg><div style="position:absolute;top:496.50px;height:14px;line-height:14px;font-size:11px;color:#000;font-weight:normal;white-space:nowrap;letter-spacing:0.3px;left:775.5px;">FMOs NS+PI_No 38_C06_exp.fcs</div><div style="position:absolute;top:496.50px;height:14px;line-height:14px;font-size:11px;color:#000;font-weight:normal;white-space:nowrap;letter-spacing:1.0px;right:22.5px;text-align:right;">286676</div><div style="position:absolute;left:704.5px;top:528.0px;width:608.5px;height:1px;background:#c9e2f3;"></div><svg style="position:absolute;left:703.5px;top:513.5px;overflow:visible;" width="14" height="14" viewBox="0 0 14 14"><path d="M7 1L13 7 7 13 1 7z" fill="none" stroke="#e2e2e2" stroke-width="1"/></svg><svg style="position:absolute;left:719.4px;top:513.5px;overflow:visible;" width="14" height="14" viewBox="0 0 14 14"><circle cx="7" cy="7" r="6.1" fill="none" stroke="#707070" stroke-width="0.9"/></svg><svg style="position:absolute;left:736px;top:514px;overflow:visible;" width="13" height="13" viewBox="0 0 13 13"><path d="M0.5 0V13M4.5 0V13M8.5 0V13M12.5 0V13M0 0.5H13M0 4.5H13M0 8.5H13M0 12.5H13" stroke="#c8281e" stroke-width="1.0" fill="none" shape-rendering="crispEdges"/></svg><div style="position:absolute;top:512.50px;height:14px;line-height:14px;font-size:11px;color:#000;font-weight:normal;white-space:nowrap;letter-spacing:0.3px;left:775.5px;">FMOs PI+PI_No CD4_D12_exp.fcs</div><div style="position:absolute;top:512.50px;height:14px;line-height:14px;font-size:11px;color:#000;font-weight:normal;white-space:nowrap;letter-spacing:1.0px;right:22.5px;text-align:right;">236726</div><div style="position:absolute;left:704.5px;top:544.0px;width:608.5px;height:1px;background:#c9e2f3;"></div><svg style="position:absolute;left:703.5px;top:529.5px;overflow:visible;" width="14" height="14" viewBox="0 0 14 14"><path d="M7 1L13 7 7 13 1 7z" fill="none" stroke="#e2e2e2" stroke-width="1"/></svg><svg style="position:absolute;left:719.4px;top:529.5px;overflow:visible;" width="14" height="14" viewBox="0 0 14 14"><circle cx="7" cy="7" r="6.1" fill="none" stroke="#707070" stroke-width="0.9"/></svg><svg style="position:absolute;left:736px;top:530px;overflow:visible;" width="13" height="13" viewBox="0 0 13 13"><path d="M0.5 0V13M4.5 0V13M8.5 0V13M12.5 0V13M0 0.5H13M0 4.5H13M0 8.5H13M0 12.5H13" stroke="#c8281e" stroke-width="1.0" fill="none" shape-rendering="crispEdges"/></svg><div style="position:absolute;top:528.50px;height:14px;line-height:14px;font-size:11px;color:#000;font-weight:normal;white-space:nowrap;letter-spacing:0.3px;left:775.5px;">FMOs PI+PI_No CD8_D11_exp.fcs</div><div style="position:absolute;top:528.50px;height:14px;line-height:14px;font-size:11px;color:#000;font-weight:normal;white-space:nowrap;letter-spacing:1.0px;right:22.5px;text-align:right;">258852</div><div style="position:absolute;left:704.5px;top:560.0px;width:608.5px;height:1px;background:#c9e2f3;"></div><svg style="position:absolute;left:703.5px;top:545.5px;overflow:visible;" width="14" height="14" viewBox="0 0 14 14"><path d="M7 1L13 7 7 13 1 7z" fill="none" stroke="#e2e2e2" stroke-width="1"/></svg><svg style="position:absolute;left:719.4px;top:545.5px;overflow:visible;" width="14" height="14" viewBox="0 0 14 14"><circle cx="7" cy="7" r="6.1" fill="none" stroke="#707070" stroke-width="0.9"/></svg><svg style="position:absolute;left:736px;top:546px;overflow:visible;" width="13" height="13" viewBox="0 0 13 13"><path d="M0.5 0V13M4.5 0V13M8.5 0V13M12.5 0V13M0 0.5H13M0 4.5H13M0 8.5H13M0 12.5H13" stroke="#c8281e" stroke-width="1.0" fill="none" shape-rendering="crispEdges"/></svg><div style="position:absolute;top:544.50px;height:14px;line-height:14px;font-size:11px;color:#000;font-weight:normal;white-space:nowrap;letter-spacing:0.3px;left:775.5px;">FMOs PI+PI_No DR_D07_exp.fcs</div><div style="position:absolute;top:544.50px;height:14px;line-height:14px;font-size:11px;color:#000;font-weight:normal;white-space:nowrap;letter-spacing:1.0px;right:22.5px;text-align:right;">314537</div><div style="position:absolute;left:704.5px;top:576.0px;width:608.5px;height:1px;background:#c9e2f3;"></div><svg style="position:absolute;left:703.5px;top:561.5px;overflow:visible;" width="14" height="14" viewBox="0 0 14 14"><path d="M7 1L13 7 7 13 1 7z" fill="none" stroke="#e2e2e2" stroke-width="1"/></svg><svg style="position:absolute;left:719.4px;top:561.5px;overflow:visible;" width="14" height="14" viewBox="0 0 14 14"><circle cx="7" cy="7" r="6.1" fill="none" stroke="#707070" stroke-width="0.9"/></svg><svg style="position:absolute;left:736px;top:562px;overflow:visible;" width="13" height="13" viewBox="0 0 13 13"><path d="M0.5 0V13M4.5 0V13M8.5 0V13M12.5 0V13M0 0.5H13M0 4.5H13M0 8.5H13M0 12.5H13" stroke="#c8281e" stroke-width="1.0" fill="none" shape-rendering="crispEdges"/></svg><div style="position:absolute;top:560.50px;height:14px;line-height:14px;font-size:11px;color:#000;font-weight:normal;white-space:nowrap;letter-spacing:0.3px;left:775.5px;">FMOs PI+PI_No IFN_D08_exp.fcs</div><div style="position:absolute;top:560.50px;height:14px;line-height:14px;font-size:11px;color:#000;font-weight:normal;white-space:nowrap;letter-spacing:1.0px;right:22.5px;text-align:right;">295075</div><div style="position:absolute;left:704.5px;top:592.0px;width:608.5px;height:1px;background:#c9e2f3;"></div><svg style="position:absolute;left:703.5px;top:577.5px;overflow:visible;" width="14" height="14" viewBox="0 0 14 14"><path d="M7 1L13 7 7 13 1 7z" fill="none" stroke="#e2e2e2" stroke-width="1"/></svg><svg style="position:absolute;left:719.4px;top:577.5px;overflow:visible;" width="14" height="14" viewBox="0 0 14 14"><circle cx="7" cy="7" r="6.1" fill="none" stroke="#707070" stroke-width="0.9"/></svg><svg style="position:absolute;left:736px;top:578px;overflow:visible;" width="13" height="13" viewBox="0 0 13 13"><path d="M0.5 0V13M4.5 0V13M8.5 0V13M12.5 0V13M0 0.5H13M0 4.5H13M0 8.5H13M0 12.5H13" stroke="#c8281e" stroke-width="1.0" fill="none" shape-rendering="crispEdges"/></svg><div style="position:absolute;top:576.50px;height:14px;line-height:14px;font-size:11px;color:#000;font-weight:normal;white-space:nowrap;letter-spacing:0.3px;left:775.5px;">FMOs PI+PI_No Perf_D09_exp.fcs</div><div style="position:absolute;top:576.50px;height:14px;line-height:14px;font-size:11px;color:#000;font-weight:normal;white-space:nowrap;letter-spacing:1.0px;right:22.5px;text-align:right;">288415</div><div style="position:absolute;left:704.5px;top:608.0px;width:608.5px;height:1px;background:#c9e2f3;"></div><svg style="position:absolute;left:703.5px;top:593.5px;overflow:visible;" width="14" height="14" viewBox="0 0 14 14"><path d="M7 1L13 7 7 13 1 7z" fill="none" stroke="#e2e2e2" stroke-width="1"/></svg><svg style="position:absolute;left:719.4px;top:593.5px;overflow:visible;" width="14" height="14" viewBox="0 0 14 14"><circle cx="7" cy="7" r="6.1" fill="none" stroke="#707070" stroke-width="0.9"/></svg><svg style="position:absolute;left:736px;top:594px;overflow:visible;" width="13" height="13" viewBox="0 0 13 13"><path d="M0.5 0V13M4.5 0V13M8.5 0V13M12.5 0V13M0 0.5H13M0 4.5H13M0 8.5H13M0 12.5H13" stroke="#c8281e" stroke-width="1.0" fill="none" shape-rendering="crispEdges"/></svg><div style="position:absolute;top:592.50px;height:14px;line-height:14px;font-size:11px;color:#000;font-weight:normal;white-space:nowrap;letter-spacing:0.3px;left:775.5px;">FMOs PI+PI_No p-ERK_D10_exp.fcs</div><div style="position:absolute;top:592.50px;height:14px;line-height:14px;font-size:11px;color:#000;font-weight:normal;white-space:nowrap;letter-spacing:1.0px;right:22.5px;text-align:right;">283790</div><div style="position:absolute;left:704.5px;top:624.0px;width:608.5px;height:1px;background:#c9e2f3;"></div><svg style="position:absolute;left:703.5px;top:609.5px;overflow:visible;" width="14" height="14" viewBox="0 0 14 14"><path d="M7 1L13 7 7 13 1 7z" fill="none" stroke="#e2e2e2" stroke-width="1"/></svg><svg style="position:absolute;left:719.4px;top:609.5px;overflow:visible;" width="14" height="14" viewBox="0 0 14 14"><circle cx="7" cy="7" r="6.1" fill="none" stroke="#707070" stroke-width="0.9"/></svg><svg style="position:absolute;left:736px;top:610px;overflow:visible;" width="13" height="13" viewBox="0 0 13 13"><path d="M0.5 0V13M4.5 0V13M8.5 0V13M12.5 0V13M0 0.5H13M0 4.5H13M0 8.5H13M0 12.5H13" stroke="#c8281e" stroke-width="1.0" fill="none" shape-rendering="crispEdges"/></svg><div style="position:absolute;top:608.50px;height:14px;line-height:14px;font-size:11px;color:#000;font-weight:normal;white-space:nowrap;letter-spacing:0.3px;left:775.5px;">FMOs PI+PI_No 38_D06_exp.fcs</div><div style="position:absolute;top:608.50px;height:14px;line-height:14px;font-size:11px;color:#000;font-weight:normal;white-space:nowrap;letter-spacing:1.0px;right:22.5px;text-align:right;">315610</div><div style="position:absolute;left:704.5px;top:640.0px;width:608.5px;height:1px;background:#c9e2f3;"></div><svg style="position:absolute;left:703.5px;top:625.5px;overflow:visible;" width="14" height="14" viewBox="0 0 14 14"><path d="M7 1L13 7 7 13 1 7z" fill="none" stroke="#e2e2e2" stroke-width="1"/></svg><svg style="position:absolute;left:719.4px;top:625.5px;overflow:visible;" width="14" height="14" viewBox="0 0 14 14"><circle cx="7" cy="7" r="6.1" fill="none" stroke="#707070" stroke-width="0.9"/></svg><svg style="position:absolute;left:736px;top:626px;overflow:visible;" width="13" height="13" viewBox="0 0 13 13"><path d="M0.5 0V13M4.5 0V13M8.5 0V13M12.5 0V13M0 0.5H13M0 4.5H13M0 8.5H13M0 12.5H13" stroke="#c8281e" stroke-width="1.0" fill="none" shape-rendering="crispEdges"/></svg><div style="position:absolute;top:624.50px;height:14px;line-height:14px;font-size:11px;color:#000;font-weight:normal;white-space:nowrap;letter-spacing:0.3px;left:775.5px;">LD1_NS+NS_A01_exp.fcs</div><div style="position:absolute;top:624.50px;height:14px;line-height:14px;font-size:11px;color:#000;font-weight:normal;white-space:nowrap;letter-spacing:1.0px;right:22.5px;text-align:right;">250342</div><div style="position:absolute;left:704.5px;top:656.0px;width:608.5px;height:1px;background:#c9e2f3;"></div><svg style="position:absolute;left:703.5px;top:641.5px;overflow:visible;" width="14" height="14" viewBox="0 0 14 14"><path d="M7 1L13 7 7 13 1 7z" fill="none" stroke="#e2e2e2" stroke-width="1"/></svg><svg style="position:absolute;left:719.4px;top:641.5px;overflow:visible;" width="14" height="14" viewBox="0 0 14 14"><circle cx="7" cy="7" r="6.1" fill="none" stroke="#707070" stroke-width="0.9"/></svg><svg style="position:absolute;left:736px;top:642px;overflow:visible;" width="13" height="13" viewBox="0 0 13 13"><path d="M0.5 0V13M4.5 0V13M8.5 0V13M12.5 0V13M0 0.5H13M0 4.5H13M0 8.5H13M0 12.5H13" stroke="#c8281e" stroke-width="1.0" fill="none" shape-rendering="crispEdges"/></svg><div style="position:absolute;top:640.50px;height:14px;line-height:14px;font-size:11px;color:#000;font-weight:normal;white-space:nowrap;letter-spacing:0.3px;left:775.5px;">LD1_NS+PI_C01_exp.fcs</div><div style="position:absolute;top:640.50px;height:14px;line-height:14px;font-size:11px;color:#000;font-weight:normal;white-space:nowrap;letter-spacing:1.0px;right:22.5px;text-align:right;">229585</div><div style="position:absolute;left:704.5px;top:672.0px;width:608.5px;height:1px;background:#c9e2f3;"></div><svg style="position:absolute;left:703.5px;top:657.5px;overflow:visible;" width="14" height="14" viewBox="0 0 14 14"><path d="M7 1L13 7 7 13 1 7z" fill="none" stroke="#e2e2e2" stroke-width="1"/></svg><svg style="position:absolute;left:719.4px;top:657.5px;overflow:visible;" width="14" height="14" viewBox="0 0 14 14"><circle cx="7" cy="7" r="6.1" fill="none" stroke="#707070" stroke-width="0.9"/></svg><svg style="position:absolute;left:736px;top:658px;overflow:visible;" width="13" height="13" viewBox="0 0 13 13"><path d="M0.5 0V13M4.5 0V13M8.5 0V13M12.5 0V13M0 0.5H13M0 4.5H13M0 8.5H13M0 12.5H13" stroke="#c8281e" stroke-width="1.0" fill="none" shape-rendering="crispEdges"/></svg><div style="position:absolute;top:656.50px;height:14px;line-height:14px;font-size:11px;color:#000;font-weight:normal;white-space:nowrap;letter-spacing:0.3px;left:775.5px;">LD1_PI+NS_B01_exp.fcs</div><div style="position:absolute;top:656.50px;height:14px;line-height:14px;font-size:11px;color:#000;font-weight:normal;white-space:nowrap;letter-spacing:1.0px;right:22.5px;text-align:right;">262774</div><div style="position:absolute;left:704.5px;top:688.0px;width:608.5px;height:1px;background:#c9e2f3;"></div><svg style="position:absolute;left:703.5px;top:673.5px;overflow:visible;" width="14" height="14" viewBox="0 0 14 14"><path d="M7 1L13 7 7 13 1 7z" fill="none" stroke="#e2e2e2" stroke-width="1"/></svg><svg style="position:absolute;left:719.4px;top:673.5px;overflow:visible;" width="14" height="14" viewBox="0 0 14 14"><circle cx="7" cy="7" r="6.1" fill="none" stroke="#707070" stroke-width="0.9"/></svg><svg style="position:absolute;left:736px;top:674px;overflow:visible;" width="13" height="13" viewBox="0 0 13 13"><path d="M0.5 0V13M4.5 0V13M8.5 0V13M12.5 0V13M0 0.5H13M0 4.5H13M0 8.5H13M0 12.5H13" stroke="#c8281e" stroke-width="1.0" fill="none" shape-rendering="crispEdges"/></svg><div style="position:absolute;top:672.50px;height:14px;line-height:14px;font-size:11px;color:#000;font-weight:normal;white-space:nowrap;letter-spacing:0.3px;left:775.5px;">LD1_PI+PI_D01_exp.fcs</div><div style="position:absolute;top:672.50px;height:14px;line-height:14px;font-size:11px;color:#000;font-weight:normal;white-space:nowrap;letter-spacing:1.0px;right:22.5px;text-align:right;">244977</div><div style="position:absolute;left:704.5px;top:704.0px;width:608.5px;height:1px;background:#c9e2f3;"></div><svg style="position:absolute;left:703.5px;top:689.5px;overflow:visible;" width="14" height="14" viewBox="0 0 14 14"><path d="M7 1L13 7 7 13 1 7z" fill="none" stroke="#e2e2e2" stroke-width="1"/></svg><svg style="position:absolute;left:719.4px;top:689.5px;overflow:visible;" width="14" height="14" viewBox="0 0 14 14"><circle cx="7" cy="7" r="6.1" fill="none" stroke="#707070" stroke-width="0.9"/></svg><svg style="position:absolute;left:736px;top:690px;overflow:visible;" width="13" height="13" viewBox="0 0 13 13"><path d="M0.5 0V13M4.5 0V13M8.5 0V13M12.5 0V13M0 0.5H13M0 4.5H13M0 8.5H13M0 12.5H13" stroke="#c8281e" stroke-width="1.0" fill="none" shape-rendering="crispEdges"/></svg><div style="position:absolute;top:688.50px;height:14px;line-height:14px;font-size:11px;color:#000;font-weight:normal;white-space:nowrap;letter-spacing:0.3px;left:775.5px;">LD2_NS+NS_A02_exp.fcs</div><div style="position:absolute;top:688.50px;height:14px;line-height:14px;font-size:11px;color:#000;font-weight:normal;white-space:nowrap;letter-spacing:1.0px;right:22.5px;text-align:right;">330780</div><div style="position:absolute;left:704.5px;top:720.0px;width:608.5px;height:1px;background:#c9e2f3;"></div><svg style="position:absolute;left:703.5px;top:705.5px;overflow:visible;" width="14" height="14" viewBox="0 0 14 14"><path d="M7 1L13 7 7 13 1 7z" fill="none" stroke="#e2e2e2" stroke-width="1"/></svg><svg style="position:absolute;left:719.4px;top:705.5px;overflow:visible;" width="14" height="14" viewBox="0 0 14 14"><circle cx="7" cy="7" r="6.1" fill="none" stroke="#707070" stroke-width="0.9"/></svg><svg style="position:absolute;left:736px;top:706px;overflow:visible;" width="13" height="13" viewBox="0 0 13 13"><path d="M0.5 0V13M4.5 0V13M8.5 0V13M12.5 0V13M0 0.5H13M0 4.5H13M0 8.5H13M0 12.5H13" stroke="#c8281e" stroke-width="1.0" fill="none" shape-rendering="crispEdges"/></svg><div style="position:absolute;top:704.50px;height:14px;line-height:14px;font-size:11px;color:#000;font-weight:normal;white-space:nowrap;letter-spacing:0.3px;left:775.5px;">LD2_NS+PI_C02_exp.fcs</div><div style="position:absolute;top:704.50px;height:14px;line-height:14px;font-size:11px;color:#000;font-weight:normal;white-space:nowrap;letter-spacing:1.0px;right:22.5px;text-align:right;">286306</div><div style="position:absolute;left:704.5px;top:736.0px;width:608.5px;height:1px;background:#c9e2f3;"></div><svg style="position:absolute;left:703.5px;top:721.5px;overflow:visible;" width="14" height="14" viewBox="0 0 14 14"><path d="M7 1L13 7 7 13 1 7z" fill="none" stroke="#e2e2e2" stroke-width="1"/></svg><svg style="position:absolute;left:719.4px;top:721.5px;overflow:visible;" width="14" height="14" viewBox="0 0 14 14"><circle cx="7" cy="7" r="6.1" fill="none" stroke="#707070" stroke-width="0.9"/></svg><svg style="position:absolute;left:736px;top:722px;overflow:visible;" width="13" height="13" viewBox="0 0 13 13"><path d="M0.5 0V13M4.5 0V13M8.5 0V13M12.5 0V13M0 0.5H13M0 4.5H13M0 8.5H13M0 12.5H13" stroke="#c8281e" stroke-width="1.0" fill="none" shape-rendering="crispEdges"/></svg><div style="position:absolute;top:720.50px;height:14px;line-height:14px;font-size:11px;color:#000;font-weight:normal;white-space:nowrap;letter-spacing:0.3px;left:775.5px;">LD2_PI+NS_B02_exp.fcs</div><div style="position:absolute;top:720.50px;height:14px;line-height:14px;font-size:11px;color:#000;font-weight:normal;white-space:nowrap;letter-spacing:1.0px;right:22.5px;text-align:right;">279202</div><div style="position:absolute;left:704.5px;top:752.0px;width:608.5px;height:1px;background:#c9e2f3;"></div><svg style="position:absolute;left:703.5px;top:737.5px;overflow:visible;" width="14" height="14" viewBox="0 0 14 14"><path d="M7 1L13 7 7 13 1 7z" fill="none" stroke="#e2e2e2" stroke-width="1"/></svg><svg style="position:absolute;left:719.4px;top:737.5px;overflow:visible;" width="14" height="14" viewBox="0 0 14 14"><circle cx="7" cy="7" r="6.1" fill="none" stroke="#707070" stroke-width="0.9"/></svg><svg style="position:absolute;left:736px;top:738px;overflow:visible;" width="13" height="13" viewBox="0 0 13 13"><path d="M0.5 0V13M4.5 0V13M8.5 0V13M12.5 0V13M0 0.5H13M0 4.5H13M0 8.5H13M0 12.5H13" stroke="#c8281e" stroke-width="1.0" fill="none" shape-rendering="crispEdges"/></svg><div style="position:absolute;top:736.50px;height:14px;line-height:14px;font-size:11px;color:#000;font-weight:normal;white-space:nowrap;letter-spacing:0.3px;left:775.5px;">LD2_PI+PI_D02_exp.fcs</div><div style="position:absolute;top:736.50px;height:14px;line-height:14px;font-size:11px;color:#000;font-weight:normal;white-space:nowrap;letter-spacing:1.0px;right:22.5px;text-align:right;">275465</div><div style="position:absolute;left:704.5px;top:768.0px;width:608.5px;height:1px;background:#c9e2f3;"></div><svg style="position:absolute;left:703.5px;top:753.5px;overflow:visible;" width="14" height="14" viewBox="0 0 14 14"><path d="M7 1L13 7 7 13 1 7z" fill="none" stroke="#e2e2e2" stroke-width="1"/></svg><svg style="position:absolute;left:719.4px;top:753.5px;overflow:visible;" width="14" height="14" viewBox="0 0 14 14"><circle cx="7" cy="7" r="6.1" fill="none" stroke="#707070" stroke-width="0.9"/></svg><svg style="position:absolute;left:736px;top:754px;overflow:visible;" width="13" height="13" viewBox="0 0 13 13"><path d="M0.5 0V13M4.5 0V13M8.5 0V13M12.5 0V13M0 0.5H13M0 4.5H13M0 8.5H13M0 12.5H13" stroke="#c8281e" stroke-width="1.0" fill="none" shape-rendering="crispEdges"/></svg><div style="position:absolute;top:752.50px;height:14px;line-height:14px;font-size:11px;color:#000;font-weight:normal;white-space:nowrap;letter-spacing:0.3px;left:775.5px;">LD4_NS+NS_A03_exp.fcs</div><div style="position:absolute;top:752.50px;height:14px;line-height:14px;font-size:11px;color:#000;font-weight:normal;white-space:nowrap;letter-spacing:1.0px;right:22.5px;text-align:right;">222740</div><div style="position:absolute;left:704.5px;top:784.0px;width:608.5px;height:1px;background:#c9e2f3;"></div><svg style="position:absolute;left:703.5px;top:769.5px;overflow:visible;" width="14" height="14" viewBox="0 0 14 14"><path d="M7 1L13 7 7 13 1 7z" fill="none" stroke="#e2e2e2" stroke-width="1"/></svg><svg style="position:absolute;left:719.4px;top:769.5px;overflow:visible;" width="14" height="14" viewBox="0 0 14 14"><circle cx="7" cy="7" r="6.1" fill="none" stroke="#707070" stroke-width="0.9"/></svg><svg style="position:absolute;left:736px;top:770px;overflow:visible;" width="13" height="13" viewBox="0 0 13 13"><path d="M0.5 0V13M4.5 0V13M8.5 0V13M12.5 0V13M0 0.5H13M0 4.5H13M0 8.5H13M0 12.5H13" stroke="#c8281e" stroke-width="1.0" fill="none" shape-rendering="crispEdges"/></svg><div style="position:absolute;top:768.50px;height:14px;line-height:14px;font-size:11px;color:#000;font-weight:normal;white-space:nowrap;letter-spacing:0.3px;left:775.5px;">LD4_NS+PI_C03_exp.fcs</div><div style="position:absolute;top:768.50px;height:14px;line-height:14px;font-size:11px;color:#000;font-weight:normal;white-space:nowrap;letter-spacing:1.0px;right:22.5px;text-align:right;">199393</div><div style="position:absolute;left:704.5px;top:800.0px;width:608.5px;height:1px;background:#c9e2f3;"></div><svg style="position:absolute;left:703.5px;top:785.5px;overflow:visible;" width="14" height="14" viewBox="0 0 14 14"><path d="M7 1L13 7 7 13 1 7z" fill="none" stroke="#e2e2e2" stroke-width="1"/></svg><svg style="position:absolute;left:719.4px;top:785.5px;overflow:visible;" width="14" height="14" viewBox="0 0 14 14"><circle cx="7" cy="7" r="6.1" fill="none" stroke="#707070" stroke-width="0.9"/></svg><svg style="position:absolute;left:736px;top:786px;overflow:visible;" width="13" height="13" viewBox="0 0 13 13"><path d="M0.5 0V13M4.5 0V13M8.5 0V13M12.5 0V13M0 0.5H13M0 4.5H13M0 8.5H13M0 12.5H13" stroke="#c8281e" stroke-width="1.0" fill="none" shape-rendering="crispEdges"/></svg><div style="position:absolute;top:784.50px;height:14px;line-height:14px;font-size:11px;color:#000;font-weight:normal;white-space:nowrap;letter-spacing:0.3px;left:775.5px;">LD4_PI+NS_B03_exp.fcs</div><div style="position:absolute;top:784.50px;height:14px;line-height:14px;font-size:11px;color:#000;font-weight:normal;white-space:nowrap;letter-spacing:1.0px;right:22.5px;text-align:right;">224146</div><div style="position:absolute;left:704.5px;top:816.0px;width:608.5px;height:1px;background:#c9e2f3;"></div><svg style="position:absolute;left:703.5px;top:801.5px;overflow:visible;" width="14" height="14" viewBox="0 0 14 14"><path d="M7 1L13 7 7 13 1 7z" fill="none" stroke="#e2e2e2" stroke-width="1"/></svg><svg style="position:absolute;left:719.4px;top:801.5px;overflow:visible;" width="14" height="14" viewBox="0 0 14 14"><circle cx="7" cy="7" r="6.1" fill="none" stroke="#707070" stroke-width="0.9"/></svg><svg style="position:absolute;left:736px;top:802px;overflow:visible;" width="13" height="13" viewBox="0 0 13 13"><path d="M0.5 0V13M4.5 0V13M8.5 0V13M12.5 0V13M0 0.5H13M0 4.5H13M0 8.5H13M0 12.5H13" stroke="#c8281e" stroke-width="1.0" fill="none" shape-rendering="crispEdges"/></svg><div style="position:absolute;top:800.50px;height:14px;line-height:14px;font-size:11px;color:#000;font-weight:normal;white-space:nowrap;letter-spacing:0.3px;left:775.5px;">LD4_PI+PI_D03_exp.fcs</div><div style="position:absolute;top:800.50px;height:14px;line-height:14px;font-size:11px;color:#000;font-weight:normal;white-space:nowrap;letter-spacing:1.0px;right:22.5px;text-align:right;">210530</div><div style="position:absolute;left:704.5px;top:832.0px;width:608.5px;height:1px;background:#c9e2f3;"></div><svg style="position:absolute;left:703.5px;top:817.5px;overflow:visible;" width="14" height="14" viewBox="0 0 14 14"><path d="M7 1L13 7 7 13 1 7z" fill="none" stroke="#e2e2e2" stroke-width="1"/></svg><svg style="position:absolute;left:719.4px;top:817.5px;overflow:visible;" width="14" height="14" viewBox="0 0 14 14"><circle cx="7" cy="7" r="6.1" fill="none" stroke="#707070" stroke-width="0.9"/></svg><svg style="position:absolute;left:736px;top:818px;overflow:visible;" width="13" height="13" viewBox="0 0 13 13"><path d="M0.5 0V13M4.5 0V13M8.5 0V13M12.5 0V13M0 0.5H13M0 4.5H13M0 8.5H13M0 12.5H13" stroke="#c8281e" stroke-width="1.0" fill="none" shape-rendering="crispEdges"/></svg><div style="position:absolute;top:816.50px;height:14px;line-height:14px;font-size:11px;color:#000;font-weight:normal;white-space:nowrap;letter-spacing:0.3px;left:775.5px;">LD12_NS+NS_A04_exp.fcs</div><div style="position:absolute;top:816.50px;height:14px;line-height:14px;font-size:11px;color:#000;font-weight:normal;white-space:nowrap;letter-spacing:1.0px;right:22.5px;text-align:right;">388463</div><div style="position:absolute;left:704.5px;top:848.0px;width:608.5px;height:1px;background:#c9e2f3;"></div><svg style="position:absolute;left:703.5px;top:833.5px;overflow:visible;" width="14" height="14" viewBox="0 0 14 14"><path d="M7 1L13 7 7 13 1 7z" fill="none" stroke="#e2e2e2" stroke-width="1"/></svg><svg style="position:absolute;left:719.4px;top:833.5px;overflow:visible;" width="14" height="14" viewBox="0 0 14 14"><circle cx="7" cy="7" r="6.1" fill="none" stroke="#707070" stroke-width="0.9"/></svg><svg style="position:absolute;left:736px;top:834px;overflow:visible;" width="13" height="13" viewBox="0 0 13 13"><path d="M0.5 0V13M4.5 0V13M8.5 0V13M12.5 0V13M0 0.5H13M0 4.5H13M0 8.5H13M0 12.5H13" stroke="#c8281e" stroke-width="1.0" fill="none" shape-rendering="crispEdges"/></svg><div style="position:absolute;top:832.50px;height:14px;line-height:14px;font-size:11px;color:#000;font-weight:normal;white-space:nowrap;letter-spacing:0.3px;left:775.5px;">LD12_NS+PI_C04_exp.fcs</div><div style="position:absolute;top:832.50px;height:14px;line-height:14px;font-size:11px;color:#000;font-weight:normal;white-space:nowrap;letter-spacing:1.0px;right:22.5px;text-align:right;">347208</div><div style="position:absolute;left:704.5px;top:864.0px;width:608.5px;height:1px;background:#c9e2f3;"></div><svg style="position:absolute;left:703.5px;top:849.5px;overflow:visible;" width="14" height="14" viewBox="0 0 14 14"><path d="M7 1L13 7 7 13 1 7z" fill="none" stroke="#e2e2e2" stroke-width="1"/></svg><svg style="position:absolute;left:719.4px;top:849.5px;overflow:visible;" width="14" height="14" viewBox="0 0 14 14"><circle cx="7" cy="7" r="6.1" fill="none" stroke="#707070" stroke-width="0.9"/></svg><svg style="position:absolute;left:736px;top:850px;overflow:visible;" width="13" height="13" viewBox="0 0 13 13"><path d="M0.5 0V13M4.5 0V13M8.5 0V13M12.5 0V13M0 0.5H13M0 4.5H13M0 8.5H13M0 12.5H13" stroke="#c8281e" stroke-width="1.0" fill="none" shape-rendering="crispEdges"/></svg><div style="position:absolute;top:848.50px;height:14px;line-height:14px;font-size:11px;color:#000;font-weight:normal;white-space:nowrap;letter-spacing:0.3px;left:775.5px;">LD12_PI+NS_B04_exp.fcs</div><div style="position:absolute;top:848.50px;height:14px;line-height:14px;font-size:11px;color:#000;font-weight:normal;white-space:nowrap;letter-spacing:1.0px;right:22.5px;text-align:right;">463536</div><div style="position:absolute;left:704.5px;top:880.0px;width:608.5px;height:1px;background:#c9e2f3;"></div><svg style="position:absolute;left:703.5px;top:865.5px;overflow:visible;" width="14" height="14" viewBox="0 0 14 14"><path d="M7 1L13 7 7 13 1 7z" fill="none" stroke="#e2e2e2" stroke-width="1"/></svg><svg style="position:absolute;left:719.4px;top:865.5px;overflow:visible;" width="14" height="14" viewBox="0 0 14 14"><circle cx="7" cy="7" r="6.1" fill="none" stroke="#707070" stroke-width="0.9"/></svg><svg style="position:absolute;left:736px;top:866px;overflow:visible;" width="13" height="13" viewBox="0 0 13 13"><path d="M0.5 0V13M4.5 0V13M8.5 0V13M12.5 0V13M0 0.5H13M0 4.5H13M0 8.5H13M0 12.5H13" stroke="#c8281e" stroke-width="1.0" fill="none" shape-rendering="crispEdges"/></svg><div style="position:absolute;top:864.50px;height:14px;line-height:14px;font-size:11px;color:#000;font-weight:normal;white-space:nowrap;letter-spacing:0.3px;left:775.5px;">LD12_PI+PI_D04_exp.fcs</div><div style="position:absolute;top:864.50px;height:14px;line-height:14px;font-size:11px;color:#000;font-weight:normal;white-space:nowrap;letter-spacing:1.0px;right:22.5px;text-align:right;">452399</div><div style="position:absolute;left:704.5px;top:896.0px;width:608.5px;height:1px;background:#c9e2f3;"></div><svg style="position:absolute;left:703.5px;top:881.5px;overflow:visible;" width="14" height="14" viewBox="0 0 14 14"><path d="M7 1L13 7 7 13 1 7z" fill="none" stroke="#e2e2e2" stroke-width="1"/></svg><svg style="position:absolute;left:719.4px;top:881.5px;overflow:visible;" width="14" height="14" viewBox="0 0 14 14"><circle cx="7" cy="7" r="6.1" fill="none" stroke="#707070" stroke-width="0.9"/></svg><svg style="position:absolute;left:736px;top:882px;overflow:visible;" width="13" height="13" viewBox="0 0 13 13"><path d="M0.5 0V13M4.5 0V13M8.5 0V13M12.5 0V13M0 0.5H13M0 4.5H13M0 8.5H13M0 12.5H13" stroke="#c8281e" stroke-width="1.0" fill="none" shape-rendering="crispEdges"/></svg><div style="position:absolute;top:880.50px;height:14px;line-height:14px;font-size:11px;color:#000;font-weight:normal;white-space:nowrap;letter-spacing:0.3px;left:775.5px;">LD14_NS+NS_A05_exp.fcs</div><div style="position:absolute;top:880.50px;height:14px;line-height:14px;font-size:11px;color:#000;font-weight:normal;white-space:nowrap;letter-spacing:1.0px;right:22.5px;text-align:right;">364117</div><div style="position:absolute;left:704.5px;top:912.0px;width:608.5px;height:1px;background:#c9e2f3;"></div><svg style="position:absolute;left:703.5px;top:897.5px;overflow:visible;" width="14" height="14" viewBox="0 0 14 14"><path d="M7 1L13 7 7 13 1 7z" fill="none" stroke="#e2e2e2" stroke-width="1"/></svg><svg style="position:absolute;left:719.4px;top:897.5px;overflow:visible;" width="14" height="14" viewBox="0 0 14 14"><circle cx="7" cy="7" r="6.1" fill="none" stroke="#707070" stroke-width="0.9"/></svg><svg style="position:absolute;left:736px;top:898px;overflow:visible;" width="13" height="13" viewBox="0 0 13 13"><path d="M0.5 0V13M4.5 0V13M8.5 0V13M12.5 0V13M0 0.5H13M0 4.5H13M0 8.5H13M0 12.5H13" stroke="#c8281e" stroke-width="1.0" fill="none" shape-rendering="crispEdges"/></svg><div style="position:absolute;top:896.50px;height:14px;line-height:14px;font-size:11px;color:#000;font-weight:normal;white-space:nowrap;letter-spacing:0.3px;left:775.5px;">LD14_NS+PI_C05_exp.fcs</div><div style="position:absolute;top:896.50px;height:14px;line-height:14px;font-size:11px;color:#000;font-weight:normal;white-space:nowrap;letter-spacing:1.0px;right:22.5px;text-align:right;">343027</div><div style="position:absolute;left:704.5px;top:928.0px;width:608.5px;height:1px;background:#c9e2f3;"></div><svg style="position:absolute;left:703.5px;top:913.5px;overflow:visible;" width="14" height="14" viewBox="0 0 14 14"><path d="M7 1L13 7 7 13 1 7z" fill="none" stroke="#e2e2e2" stroke-width="1"/></svg><svg style="position:absolute;left:719.4px;top:913.5px;overflow:visible;" width="14" height="14" viewBox="0 0 14 14"><circle cx="7" cy="7" r="6.1" fill="none" stroke="#707070" stroke-width="0.9"/></svg><svg style="position:absolute;left:736px;top:914px;overflow:visible;" width="13" height="13" viewBox="0 0 13 13"><path d="M0.5 0V13M4.5 0V13M8.5 0V13M12.5 0V13M0 0.5H13M0 4.5H13M0 8.5H13M0 12.5H13" stroke="#c8281e" stroke-width="1.0" fill="none" shape-rendering="crispEdges"/></svg><div style="position:absolute;top:912.50px;height:14px;line-height:14px;font-size:11px;color:#000;font-weight:normal;white-space:nowrap;letter-spacing:0.3px;left:775.5px;">LD14_PI+NS_B05_exp.fcs</div><div style="position:absolute;top:912.50px;height:14px;line-height:14px;font-size:11px;color:#000;font-weight:normal;white-space:nowrap;letter-spacing:1.0px;right:22.5px;text-align:right;">407999</div><div style="position:absolute;left:704.5px;top:944.0px;width:608.5px;height:1px;background:#c9e2f3;"></div><svg style="position:absolute;left:703.5px;top:929.5px;overflow:visible;" width="14" height="14" viewBox="0 0 14 14"><path d="M7 1L13 7 7 13 1 7z" fill="none" stroke="#e2e2e2" stroke-width="1"/></svg><svg style="position:absolute;left:719.4px;top:929.5px;overflow:visible;" width="14" height="14" viewBox="0 0 14 14"><circle cx="7" cy="7" r="6.1" fill="none" stroke="#707070" stroke-width="0.9"/></svg><svg style="position:absolute;left:736px;top:930px;overflow:visible;" width="13" height="13" viewBox="0 0 13 13"><path d="M0.5 0V13M4.5 0V13M8.5 0V13M12.5 0V13M0 0.5H13M0 4.5H13M0 8.5H13M0 12.5H13" stroke="#c8281e" stroke-width="1.0" fill="none" shape-rendering="crispEdges"/></svg><div style="position:absolute;top:928.50px;height:14px;line-height:14px;font-size:11px;color:#000;font-weight:normal;white-space:nowrap;letter-spacing:0.3px;left:775.5px;">LD14_PI+PI_D05_exp.fcs</div><div style="position:absolute;top:928.50px;height:14px;line-height:14px;font-size:11px;color:#000;font-weight:normal;white-space:nowrap;letter-spacing:1.0px;right:22.5px;text-align:right;">304383</div><div style="position:absolute;left:1013px;top:400.5px;width:1px;height:534.5px;background:#c9e2f3;"></div><div style="position:absolute;left:1163px;top:400.5px;width:1px;height:534.5px;background:#c9e2f3;"></div><div style="position:absolute;left:1313px;top:400.5px;width:1px;height:534.5px;background:#c9e2f3;"></div></div><div style="position:absolute;left:702px;top:379px;width:1px;height:556px;background:#c4c4c4;"></div><div style="position:absolute;left:702px;top:233.5px;width:1px;height:139.5px;background:#c4c4c4;"></div><div style="position:absolute;left:702px;top:237.5px;width:632px;height:1px;background:#c4c4c4;"></div><div style="position:absolute;left:700px;top:935px;width:634px;height:1px;background:#c6c6c6;"></div><div style="position:absolute;left:700px;top:936px;width:634px;height:1px;background:#fafafa;"></div><div style="position:absolute;left:700px;top:937px;width:634px;height:1px;background:#9c9c9c;"></div><div style="position:absolute;left:700px;top:938px;width:634px;height:28px;background:#ececec;"></div></div><svg style="position:absolute;left:0px;top:62.5px;overflow:visible;" width="4" height="4" viewBox="0 0 4 4"><path d="M0 0H3C2 0.5 1 1.5 0 3z" fill="#111"/></svg><svg style="position:absolute;left:1330px;top:62.5px;overflow:visible;" width="3" height="5" viewBox="0 0 3 5"><path d="M0 0H3V5C2.5 3 1.5 1 0 0z" fill="#222"/></svg><svg style="position:absolute;left:1325px;top:952px;overflow:visible;" width="8" height="11" viewBox="0 0 8 11"><path d="M8 0V11H0C4 10 7.5 6 8 0z" fill="#111"/></svg><div style="position:absolute;left:698.8px;top:63px;width:1.5px;height:900px;background:#111;"></div><svg style="position:absolute;left:692px;top:63px;overflow:visible;" width="9" height="8" viewBox="0 0 9 8"><path d="M0 0H9V8C8 4 5 1 0 0z" fill="#111"/></svg><svg style="position:absolute;left:694px;top:955px;overflow:visible;" width="11" height="8" viewBox="0 0 11 8"><path d="M0 8H11C8 7 6 4 6 0H5C5 4 3 7 0 8z" fill="#111"/></svg><svg style="position:absolute;left:202px;top:3px;overflow:visible;filter:drop-shadow(0.5px 2.5px 1.8px rgba(0,0,0,0.5));" width="500" height="60"><text x="3" y="24.24" font-family="Liberation Sans" font-weight="bold" font-size="18" fill="#f8951d" stroke="#141414" stroke-width="4.2" stroke-linejoin="round" paint-order="stroke">Previous workspace with Transforms set on</text><text x="3" y="24.24" font-family="Liberation Sans" font-weight="bold" font-size="18" fill="#f8951d" stroke="#f8951d" stroke-width="0.5" stroke-linejoin="round">Previous workspace with Transforms set on</text><text x="3" y="48.24" font-family="Liberation Sans" font-weight="bold" font-size="18" fill="#f8951d" stroke="#141414" stroke-width="4.2" stroke-linejoin="round" paint-order="stroke">the grey acquisition defined matrix</text><text x="3" y="48.24" font-family="Liberation Sans" font-weight="bold" font-size="18" fill="#f8951d" stroke="#f8951d" stroke-width="0.5" stroke-linejoin="round">the grey acquisition defined matrix</text></svg><svg style="position:absolute;left:812px;top:3px;overflow:visible;filter:drop-shadow(0.5px 2.5px 1.8px rgba(0,0,0,0.5));" width="500" height="60"><text x="3" y="24.24" font-family="Liberation Sans" font-weight="bold" font-size="18" fill="#f8951d" stroke="#141414" stroke-width="4.2" stroke-linejoin="round" paint-order="stroke">New workspace with new data and a different</text><text x="3" y="24.24" font-family="Liberation Sans" font-weight="bold" font-size="18" fill="#f8951d" stroke="#f8951d" stroke-width="0.5" stroke-linejoin="round">New workspace with new data and a different</text><text x="3" y="48.24" font-family="Liberation Sans" font-weight="bold" font-size="18" fill="#f8951d" stroke="#141414" stroke-width="4.2" stroke-linejoin="round" paint-order="stroke">comp matrix without Transforms set</text><text x="3" y="48.24" font-family="Liberation Sans" font-weight="bold" font-size="18" fill="#f8951d" stroke="#f8951d" stroke-width="0.5" stroke-linejoin="round">comp matrix without Transforms set</text></svg><div style="position:absolute;left:795.5px;top:425px;width:441.5px;height:144.5px;background:#efefef;border-radius:10px;box-shadow:0 0 0 0.5px rgba(0,0,0,0.18),0 12px 30px rgba(0,0,0,0.28);"></div><div style="position:absolute;left:795.5px;top:453px;width:441.5px;height:1px;background:#d6d6d6;"></div><svg style="position:absolute;left:802.5px;top:432px;overflow:visible;" width="13" height="13" viewBox="0 0 13 13"><circle cx="6.5" cy="6.5" r="6" fill="#fe5f57" stroke="#e0443e" stroke-width="0.7"/></svg><svg style="position:absolute;left:822.5px;top:432px;overflow:visible;" width="13" height="13" viewBox="0 0 13 13"><circle cx="6.5" cy="6.5" r="6" fill="#d4d4d4" stroke="#bdbdbd" stroke-width="0.7"/></svg><svg style="position:absolute;left:842.5px;top:432px;overflow:visible;" width="13" height="13" viewBox="0 0 13 13"><circle cx="6.5" cy="6.5" r="6" fill="#d4d4d4" stroke="#bdbdbd" stroke-width="0.7"/></svg><div style="position:absolute;top:430.30px;height:17px;line-height:17px;font-size:13px;color:#4a4a4a;font-weight:bold;white-space:nowrap;letter-spacing:0.5px;left:916.00px;width:200px;text-align:center;">Confirmation</div><svg style="position:absolute;left:815px;top:468px;overflow:visible;" width="50" height="50" viewBox="0 0 50 50"><g transform="translate(25,25) scale(1.3157894736842106)"><circle cx="0" cy="0" r="19" fill="#353535"/>
<polygon points="0,-12.4 -10.8,8.6 -2.4,12.4" fill="#707070"/>
<polygon points="0,-12.4 -2.4,12.4 10.8,9.2" fill="#9c9c9c"/>
<polygon points="4.2,-3.6 12,-8 12.2,-5.6 4.6,-1.4" fill="#a8161a"/>
<polygon points="4.6,-1.4 12.2,-5.6 12.4,-3.0 5.0,0.8" fill="#e0302a"/>
<polygon points="5.0,0.8 12.4,-3.0 12.6,-0.2 5.4,3.0" fill="#f2642a"/>
<polygon points="-8.2,-1.6 -2.6,0.6 -3.0,2.8 -8.8,0.6" fill="#c62020"/>
<polygon points="-8.8,0.6 -3.0,2.8 -3.4,5.0 -9.4,2.8" fill="#ee5a2a"/></g></svg><div style="position:absolute;top:464.30px;height:17px;line-height:17px;font-size:13px;color:#1a1a1a;font-weight:normal;white-space:nowrap;letter-spacing:0.66px;left:884.3px;">Do you want to apply the parameter transform</div><div style="position:absolute;top:480.20px;height:17px;line-height:17px;font-size:13px;color:#1a1a1a;font-weight:normal;white-space:nowrap;letter-spacing:0.66px;left:884.3px;">settings to all samples with this compensation</div><div style="position:absolute;top:496.10px;height:17px;line-height:17px;font-size:13px;color:#1a1a1a;font-weight:normal;white-space:nowrap;letter-spacing:0.66px;left:884.3px;">matrix?</div><div style="position:absolute;left:969px;top:530px;width:63px;height:20.5px;background:#fff;border-radius:5px;box-shadow:0 0.5px 1.5px rgba(0,0,0,0.3);"></div><div style="position:absolute;top:531.50px;height:16px;line-height:16px;font-size:12px;color:#111;font-weight:normal;white-space:nowrap;letter-spacing:0.3px;left:960.50px;width:80px;text-align:center;">Cancel</div><div style="position:absolute;left:1057.5px;top:530px;width:63.700000000000045px;height:20.5px;background:#fff;border-radius:5px;box-shadow:0 0.5px 1.5px rgba(0,0,0,0.3);"></div><div style="position:absolute;top:531.50px;height:16px;line-height:16px;font-size:12px;color:#111;font-weight:normal;white-space:nowrap;letter-spacing:0.3px;left:1049.35px;width:80px;text-align:center;">No</div><div style="position:absolute;left:1147px;top:530px;width:63px;height:20px;background:linear-gradient(#3b9cff,#0a84ff);border-radius:5px;"></div><div style="position:absolute;top:531.50px;height:16px;line-height:16px;font-size:12px;color:#111;font-weight:normal;white-space:nowrap;letter-spacing:0.4px;left:1148.50px;width:60px;text-align:center;">Yes</div><div style="position:absolute;left:1142.6px;top:523.1px;width:72.3px;height:33.2px;border:2.7px solid #f7931e;box-sizing:border-box;border-radius:1px;"></div><svg style="position:absolute;left:1152px;top:493.5px;overflow:visible;filter:drop-shadow(0.5px 2.5px 1.8px rgba(0,0,0,0.5));" width="500" height="36"><text x="3" y="24.06" font-family="Liberation Sans" font-weight="bold" font-size="17.5" fill="#f8951d" stroke="#141414" stroke-width="4.2" stroke-linejoin="round" paint-order="stroke">Click</text><text x="3" y="24.06" font-family="Liberation Sans" font-weight="bold" font-size="17.5" fill="#f8951d" stroke="#f8951d" stroke-width="0.5" stroke-linejoin="round">Click</text></svg><svg style="position:absolute;left:0;top:0;" width="1333" height="963"><defs><filter id="sh" x="-5%" y="-50%" width="110%" height="200%"><feGaussianBlur stdDeviation="1.6"/></filter></defs><polygon points="269.0,413.3 757.0,404.2 757.0,393.5 791.4,410.4 757.6,428.0 757.0,418.5 269.0,415.6" fill="rgba(0,0,0,0.45)" transform="translate(1,3)" filter="url(#sh)"/><polygon points="269.0,413.3 757.0,404.2 757.0,393.5 791.4,410.4 757.6,428.0 757.0,418.5 269.0,415.6" fill="#f7931e"/></svg><svg style="position:absolute;left:359px;top:417px;overflow:visible;filter:drop-shadow(0.5px 2.5px 1.8px rgba(0,0,0,0.5));" width="500" height="61.0"><text x="3" y="24.49" font-family="Liberation Sans" font-weight="bold" font-size="18" fill="#f8951d" stroke="#141414" stroke-width="4.2" stroke-linejoin="round" paint-order="stroke">Drag and drop one sample in old workspace</text><text x="3" y="24.49" font-family="Liberation Sans" font-weight="bold" font-size="18" fill="#f8951d" stroke="#f8951d" stroke-width="0.5" stroke-linejoin="round">Drag and drop one sample in old workspace</text><text x="3" y="48.99" font-family="Liberation Sans" font-weight="bold" font-size="18" fill="#f8951d" stroke="#141414" stroke-width="4.2" stroke-linejoin="round" paint-order="stroke">onto another sample in the new workspace</text><text x="3" y="48.99" font-family="Liberation Sans" font-weight="bold" font-size="18" fill="#f8951d" stroke="#f8951d" stroke-width="0.5" stroke-linejoin="round">onto another sample in the new workspace</text></svg>
</div></body></html>
